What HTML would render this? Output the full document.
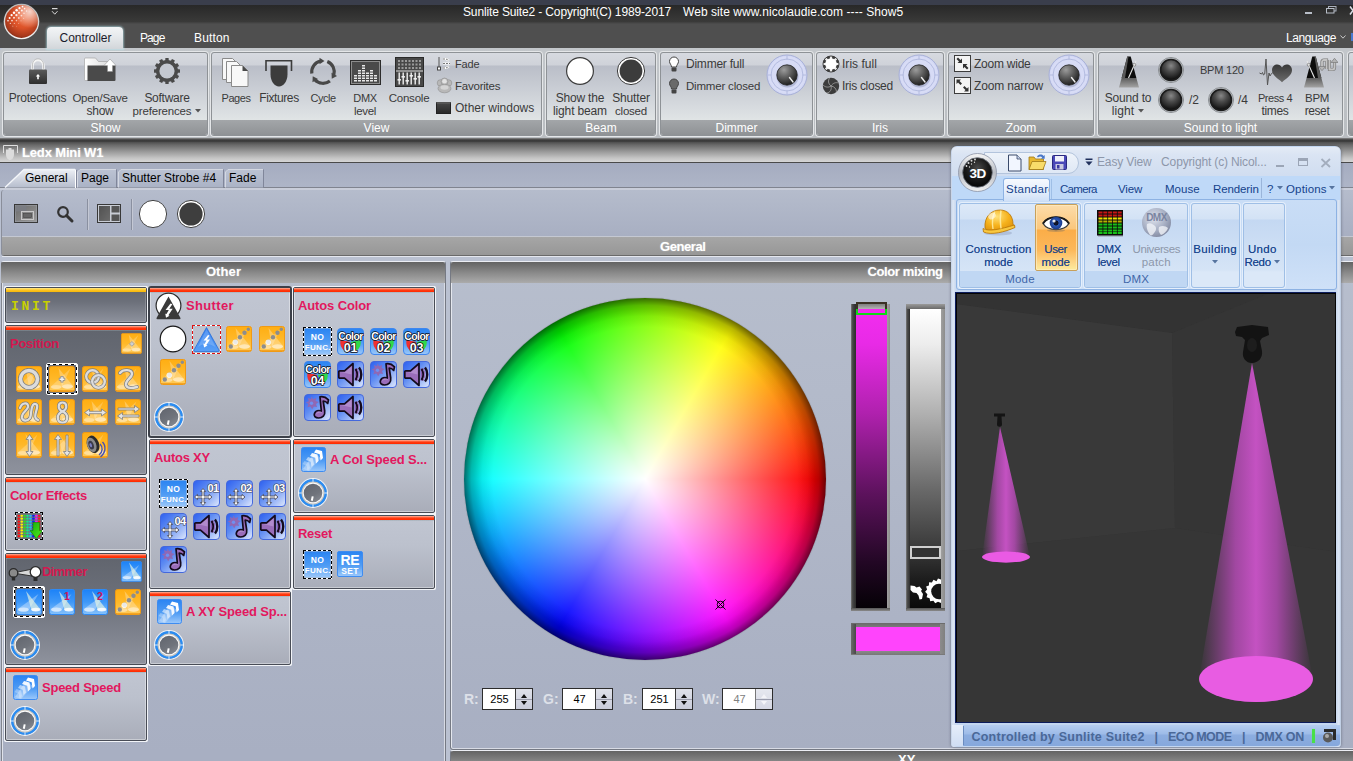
<!DOCTYPE html>
<html><head><meta charset="utf-8"><title>Sunlite Suite2</title>
<style>
*{box-sizing:border-box}
html,body{margin:0;padding:0}
body{width:1353px;height:761px;overflow:hidden;position:relative;background:#bac1d1;font-family:"Liberation Sans",sans-serif;font-size:12px;color:#222}
.a{position:absolute}
.t{position:absolute;white-space:nowrap;line-height:1}
/* main ribbon */
#topstrip{left:0;top:0;width:1353px;height:5px;background:#3a3e4c}
#titlebar{left:0;top:5px;width:1353px;height:19px;background:linear-gradient(#282828 0,#3a3a39 17px,#4a4a4a 18px,#4a4a4a 19px)}
#tabrow{left:0;top:24px;width:1353px;height:24px;background:#4f4f4f}
#ribbon{left:0;top:48px;width:1353px;height:90px;background:linear-gradient(#c3c7cb,#b9bdc1);border-radius:4px 4px 0 0}
#ribbot{left:0;top:138px;width:1353px;height:5px;background:linear-gradient(#8a8a8a,#3a3a3a 40%,#444)}
.grp{position:absolute;top:52px;height:84px;border:1px solid #8e9296;border-radius:3px;background:linear-gradient(#d7dae0 0,#cfd2d9 12px,#babec8 13px,#c9cdd4 35px,#dbdfe2 60px,#e1e5e6 68px);box-shadow:0 0 0 1px #e4e6e8;overflow:hidden}
.grp .lab{position:absolute;left:0;right:0;bottom:0;height:15px;background:linear-gradient(#a3a6a9,#8f9295);color:#fff;text-align:center;font-size:12px;line-height:16px}
.rt{position:absolute;white-space:nowrap;line-height:13px;font-size:12px;color:#3a3a3a;text-align:center}
</style></head><body>
<!-- MAIN WINDOW TOP -->
<div class="a" id="topstrip"></div>
<div class="a" id="titlebar"></div>
<div class="a" id="tabrow"></div>
<div class="a" id="ribbon"></div>
<div class="a" id="ribbot"></div>
<!--RIBBON-START-->
<!-- title text -->
<div class="t" style="left:463px;top:6px;color:#fff;font-size:12px;letter-spacing:-0.14px;white-space:pre">Sunlite Suite2 - Copyright(C) 1989-2017</div><div class="t" style="left:683px;top:6px;color:#fff;font-size:12px;letter-spacing:0.06px;white-space:pre">Web site www.nicolaudie.com ---- Show5</div>
<!-- window controls -->
<div class="a" style="left:1305px;top:12px;width:7px;height:2px;background:#b8bec8"></div>
<svg class="a" style="left:1326px;top:6px" width="11" height="8" viewBox="0 0 11 8"><rect x="2.500" y="0.500" width="7.500" height="4.500" fill="none" stroke="#aab0bc"/><rect x="0.500" y="2.500" width="7.500" height="4.500" fill="#303030" stroke="#b8bec8"/></svg><svg class="a" style="left:1349px;top:6px" width="6" height="9" viewBox="0 0 6 9"><path d="M1 0.500l6 8M1 8.500l6 -8" stroke="#d8dce4" stroke-width="1.600"/></svg>
<!-- orb -->
<svg class="a" style="left:2px;top:2px" width="40" height="40" viewBox="0 0 40 40">
<defs>
<radialGradient id="orbg" cx="0.55" cy="0.38" r="0.7"><stop offset="0" stop-color="#ee6a3c"/><stop offset="0.45" stop-color="#dc5228"/><stop offset="0.8" stop-color="#a8391c"/><stop offset="1" stop-color="#6e2612"/></radialGradient>
<linearGradient id="orbr" x1="0" y1="0" x2="0" y2="1"><stop offset="0" stop-color="#b8b8b8"/><stop offset="1" stop-color="#f4f4f4"/></linearGradient>
<radialGradient id="orbh" cx="0.75" cy="0.2" r="0.5"><stop offset="0" stop-color="#fff" stop-opacity="0.75"/><stop offset="1" stop-color="#fff" stop-opacity="0"/></radialGradient>
</defs>
<circle cx="19.5" cy="19.5" r="17.8" fill="url(#orbr)"/>
<circle cx="19.5" cy="19.5" r="16.4" fill="url(#orbg)"/>
<circle cx="19.5" cy="19.5" r="16.4" fill="url(#orbh)"/>
<g fill="#fff">
<circle cx="20.5" cy="4.6" r="0.9"/><circle cx="17.5" cy="6.2" r="1.1"/><circle cx="14.6" cy="8.3" r="1.2"/><circle cx="12" cy="10.7" r="1.2"/><circle cx="9.6" cy="13.2" r="1.1"/><circle cx="7.6" cy="16" r="1"/><circle cx="6" cy="18.8" r="0.8"/>
<circle cx="22.6" cy="6.6" r="0.8" opacity="0.9"/><circle cx="19.8" cy="8.6" r="1" opacity="0.9"/><circle cx="17" cy="10.8" r="1.1" opacity="0.9"/><circle cx="14.4" cy="13.2" r="1.1" opacity="0.9"/><circle cx="12" cy="15.8" r="1" opacity="0.85"/><circle cx="10" cy="18.6" r="0.9" opacity="0.8"/><circle cx="8.4" cy="21.4" r="0.7" opacity="0.7"/>
<circle cx="24.6" cy="9" r="0.7" opacity="0.7"/><circle cx="22" cy="11.2" r="0.8" opacity="0.7"/><circle cx="19.4" cy="13.6" r="0.9" opacity="0.7"/><circle cx="16.8" cy="16" r="0.9" opacity="0.65"/><circle cx="14.4" cy="18.6" r="0.8" opacity="0.6"/><circle cx="12.4" cy="21.4" r="0.7" opacity="0.5"/><circle cx="10.8" cy="24.2" r="0.6" opacity="0.4"/>
<circle cx="21.6" cy="16.4" r="0.6" opacity="0.4"/><circle cx="19" cy="18.8" r="0.6" opacity="0.4"/><circle cx="16.6" cy="21.4" r="0.6" opacity="0.35"/><circle cx="14.6" cy="24.2" r="0.5" opacity="0.3"/>
</g>
</svg>
<!-- quick access arrow -->
<svg class="a" style="left:51px;top:7px" width="8" height="9" viewBox="0 0 8 9"><rect x="1" y="1" width="5.5" height="1.2" fill="#d8d8d8"/><path d="M1 4.2 L3.75 7.2 L6.5 4.2" fill="none" stroke="#d8d8d8" stroke-width="1"/></svg>
<!-- tabs -->
<div class="a" style="left:47px;top:27px;width:76px;height:22px;border-radius:4px 4px 0 0;background:linear-gradient(#f3f5f6,#e6e9ec 45%,#d2d6da);box-shadow:0 0 2px 1px rgba(190,240,250,.55)"></div>
<div class="t" style="left:59.5px;top:32px;color:#1a1a2a;font-size:12px;letter-spacing:-0.003px">Controller</div>
<div class="t" style="left:140px;top:32px;color:#fff;font-size:12px;letter-spacing:-0.908px">Page</div>
<div class="t" style="left:194px;top:32px;color:#fff;font-size:12px;letter-spacing:0.166px">Button</div>
<div class="t" style="left:1286px;top:32px;color:#fff;font-size:12px;letter-spacing:-0.424px">Language</div>
<svg class="a" style="left:1340px;top:35px" width="6" height="4" viewBox="0 0 6 4"><path d="M0.500 0.500 L3 3.200 L5.500 0.500" fill="none" stroke="#c8c8c8" stroke-width="1"/></svg>
<div class="a" style="left:1351px;top:33px;width:2px;height:8px;background:#4a7ad0"></div>
<!-- groups -->
<div class="grp" style="left:3px;width:205px"><div class="lab">Show</div></div>
<div class="grp" style="left:211px;width:331px"><div class="lab">View</div></div>
<div class="grp" style="left:546px;width:110px"><div class="lab">Beam</div></div>
<div class="grp" style="left:660px;width:153px"><div class="lab">Dimmer</div></div>
<div class="grp" style="left:816px;width:128px"><div class="lab">Iris</div></div>
<div class="grp" style="left:948px;width:146px"><div class="lab">Zoom</div></div>
<div class="grp" style="left:1098px;width:245px"><div class="lab">Sound to light</div></div>
<div class="grp" style="left:1348px;width:20px"><div class="lab"></div></div>
<svg width="0" height="0" style="position:absolute"><defs>
<linearGradient id="dk" x1="0" y1="0" x2="0" y2="1"><stop offset="0" stop-color="#5a5a5a"/><stop offset="1" stop-color="#2e2e2e"/></linearGradient>
<radialGradient id="knobbg" cx="0.5" cy="0.5" r="0.5"><stop offset="0" stop-color="#d4d9f4"/><stop offset="0.9" stop-color="#d8dcf6"/><stop offset="1" stop-color="#ccd2f0"/></radialGradient>
<radialGradient id="knob" cx="0.35" cy="0.25" r="0.85"><stop offset="0" stop-color="#9c9c9c"/><stop offset="0.45" stop-color="#5c5c5c"/><stop offset="0.85" stop-color="#262626"/><stop offset="1" stop-color="#141414"/></radialGradient>
<radialGradient id="rbtn" cx="0.5" cy="0.3" r="0.62"><stop offset="0" stop-color="#888"/><stop offset="0.45" stop-color="#4c4c4c"/><stop offset="0.8" stop-color="#2a2a2a"/><stop offset="1" stop-color="#151515"/></radialGradient>
<g id="bigknob"><circle cx="21" cy="21" r="20" fill="url(#knobbg)" stroke="#a8b0d8" stroke-width="1"/><circle cx="21" cy="21" r="16" fill="none" stroke="#b4bce0" stroke-width="1"/><path d="M21 1v5M21 36v5M1 21h5M36 21h5" stroke="#b4bce0" stroke-width="1"/><circle cx="21.5" cy="22.5" r="11" fill="#9098b8" opacity="0.5"/><circle cx="21" cy="21" r="10.2" fill="url(#knob)" stroke="#222" stroke-width="0.8"/><path d="M23.5 23.5 L27 28" stroke="#eee" stroke-width="1.4" stroke-linecap="round"/></g>
<g id="rbt"><circle cx="13" cy="13" r="12.5" fill="#bfc3c7" stroke="#8a8e92" stroke-width="1"/><circle cx="13" cy="13" r="10.5" fill="url(#rbtn)" stroke="#1c1c1c" stroke-width="1.6"/></g>
</defs></svg>
<!-- SHOW group -->
<svg class="a" style="left:27px;top:57px" width="22" height="29" viewBox="0 0 22 29"><path d="M5.5 13 V8.5 A5.5 5.5 0 0 1 16.5 8.5 V13" fill="none" stroke="#f4f4f4" stroke-width="2.6"/><path d="M5.5 13 V8.5 A5.5 5.5 0 0 1 16.5 8.5 V13" fill="none" stroke="#a0a0a0" stroke-width="0.6" transform="translate(0,-1.2)"/><rect x="2" y="12.5" width="18" height="14.5" rx="1" fill="url(#dk)"/><path d="M11 17 l2.2 2.6h-1.4v2.6h-1.6v-2.6h-1.4z" fill="#fff"/></svg>
<div class="rt" style="left:4px;width:67px;top:92px;"><span style="letter-spacing:-0.248px">Protections</span></div>
<svg class="a" style="left:83px;top:57px" width="34" height="26" viewBox="0 0 34 26"><defs><linearGradient id="fldw" x1="0" y1="0" x2="1" y2="0"><stop offset="0" stop-color="#fff"/><stop offset="1" stop-color="#d8d8d8"/></linearGradient></defs><path d="M1.500 2 a1 1 0 0 1 1 -1 h10 l3 3.500 h13 v19 h-26 a1 1 0 0 1 -1 -1z" fill="url(#fldw)" stroke="#9a9a9a" stroke-width="0.600"/><path d="M4.500 8.500 h28 v14.500 a1 1 0 0 1 -1 1 h-27z" fill="#4a4a4a"/><path d="M27 2 l6 6.500h-3.500v6h-5v-6h-3.500z" fill="#fff" stroke="#8a8a8a" stroke-width="0.500"/></svg>
<div class="rt" style="left:66px;width:68px;top:92px;"><span style="font-size:11.5px;letter-spacing:-0.261px">Open/Save</span><br><span style="letter-spacing:-0.279px">show</span></div>
<svg class="a" style="left:153px;top:57px" width="28" height="28" viewBox="-14 -14 28 28"><g fill="#4a4a4a"><circle r="11"/><g id="teeth"><rect x="-1.700" y="-13" width="3.400" height="4" rx="0.500"/><rect x="-1.700" y="9" width="3.400" height="4" rx="0.500"/></g><use href="#teeth" transform="rotate(30)"/><use href="#teeth" transform="rotate(60)"/><use href="#teeth" transform="rotate(90)"/><use href="#teeth" transform="rotate(120)"/><use href="#teeth" transform="rotate(150)"/></g><circle r="7.600" fill="#c4c8d0"/></svg>
<div class="rt" style="left:130px;width:74px;top:92px;"><span style="letter-spacing:-0.27px">Software</span><br><span style="font-size:11.5px;letter-spacing:-0.176px">preferences</span>&nbsp;&nbsp;&nbsp;</div>
<svg class="a" style="left:195px;top:109px" width="6" height="4" viewBox="0 0 6 4"><path d="M0 0h6l-3 3.5z" fill="#555"/></svg>
<!-- VIEW group -->
<svg class="a" style="left:221px;top:57px" width="30" height="31" viewBox="0 0 30 31"><g stroke="#8a8a8a" stroke-width="1" fill="#f8f8f8"><path d="M1.5 1.5h10l4 4v17h-14z"/><path d="M5.500 4.500h10l4 4v17h-14z"/><path d="M10.500 8.500h11l5.500 5.500v15.500h-16.500z"/></g><path d="M21.500 8.500v5.500h5.500z" fill="#4a4a4a"/></svg>
<div class="rt" style="left:211px;width:50px;top:92px;"><span style="font-size:11px;letter-spacing:-0.461px">Pages</span></div>
<svg class="a" style="left:265px;top:59px" width="28" height="29" viewBox="0 0 28 29"><path d="M1 12V1.800h25.500V12" fill="none" stroke="#3c3c3c" stroke-width="1.600"/><path d="M5.500 6.500 h17 v9 c0 6.500 -4 12 -8.500 12 s-8.500 -5.500 -8.500 -12z" fill="#3c3c3c"/></svg>
<div class="rt" style="left:254px;width:50px;top:92px;"><span style="letter-spacing:-0.398px">Fixtures</span></div>
<svg class="a" style="left:308px;top:57px" width="30" height="30" viewBox="-15 -15 30 30"><g id="cyc"><path d="M-2.500 -11 A11.300 11.300 0 0 0 -11.200 1.500" fill="none" stroke="#484848" stroke-width="3.200"/><path d="M-3.500 -14.200 l5 3.200 -5 3.200z" fill="#484848"/></g><use href="#cyc" transform="rotate(120)"/><use href="#cyc" transform="rotate(240)"/></svg>
<div class="rt" style="left:298px;width:50px;top:92px;"><span style="font-size:11px;letter-spacing:-0.483px">Cycle</span></div>
<svg class="a" style="left:350px;top:60px" width="31" height="25" viewBox="0 0 31 25"><rect x="0.5" y="0.5" width="30" height="24" fill="#4a4a4a" stroke="#2c2c2c"/><rect x="1.500" y="1.500" width="28" height="22" fill="none" stroke="#8c8c8c" stroke-width="1"/><g fill="#e8e8e8"><path d="M4 20h3v1.500h-3zM4 17.500h3v1.500h-3zM4 15h3v1.500h-3z"/><path d="M8 20h3v1.500h-3zM8 17.500h3v1.500h-3zM8 15h3v1.500h-3zM8 12.500h3v1.500h-3zM8 10h3v1.500h-3z"/><path d="M12 20h3v1.500h-3zM12 17.500h3v1.500h-3zM12 15h3v1.500h-3zM12 12.500h3v1.500h-3zM12 10h3v1.500h-3zM12 7.500h3v1.500h-3zM12 5h3v1.500h-3z"/><path d="M16 20h3v1.500h-3zM16 17.500h3v1.500h-3zM16 15h3v1.500h-3zM16 12.500h3v1.500h-3z"/><path d="M20 20h3v1.500h-3zM20 17.500h3v1.500h-3zM20 15h3v1.500h-3zM20 12.500h3v1.500h-3zM20 10h3v1.500h-3z"/><path d="M24 20h3v1.500h-3zM24 17.500h3v1.500h-3zM24 15h3v1.500h-3z"/></g></svg>
<div class="rt" style="left:340px;width:50px;top:92px;"><span style="font-size:11px;letter-spacing:-0.384px">DMX</span><br><span style="font-size:11.5px;letter-spacing:-0.311px">level</span></div>
<svg class="a" style="left:395px;top:57px" width="29" height="30" viewBox="0 0 29 30"><rect x="0.5" y="0.5" width="28" height="29" fill="#484848" stroke="#2a2a2a"/><g fill="#9a9a9a"><path d="M3 3h2v2h-2zM6.500 3h2v2h-2zM10 3h2v2h-2zM13.500 3h2v2h-2zM17 3h2v2h-2zM20.500 3h2v2h-2zM24 3h2v2h-2zM3 6.500h2v2h-2zM6.500 6.500h2v2h-2zM10 6.500h2v2h-2zM13.500 6.500h2v2h-2zM17 6.500h2v2h-2zM20.500 6.500h2v2h-2zM24 6.500h2v2h-2zM3 10h2v2h-2zM6.500 10h2v2h-2zM10 10h2v2h-2zM13.500 10h2v2h-2zM17 10h2v2h-2zM20.500 10h2v2h-2zM24 10h2v2h-2z"/></g><rect x="1" y="13.500" width="27" height="1" fill="#ddd"/><g fill="#f0f0f0"><rect x="3.500" y="15.500" width="1.400" height="12"/><rect x="7.500" y="15.500" width="1.400" height="12"/><rect x="11.500" y="15.500" width="1.400" height="12"/><rect x="15.500" y="15.500" width="1.400" height="12"/><rect x="19.500" y="15.500" width="1.400" height="12"/><rect x="23.500" y="15.500" width="1.400" height="12"/><rect x="2.500" y="22" width="3.400" height="1.600"/><rect x="6.500" y="19" width="3.400" height="1.600"/><rect x="10.500" y="23" width="3.400" height="1.600"/><rect x="14.500" y="18" width="3.400" height="1.600"/><rect x="18.500" y="21" width="3.400" height="1.600"/><rect x="22.500" y="19" width="3.400" height="1.600"/></g></svg>
<div class="rt" style="left:384px;width:50px;top:92px;"><span style="font-size:11.5px;letter-spacing:-0.215px">Console</span></div>
<svg class="a" style="left:436px;top:56px" width="16" height="16" viewBox="0 0 16 16"><path d="M3 1v10" stroke="#555" stroke-width="1"/><rect x="1.500" y="11" width="3" height="3" fill="#fff" stroke="#444" stroke-width="1"/><path d="M7 3h3l3 1.500M7 7.500h7M7 12h3l3-1.500" stroke="#fff" stroke-width="2.200" fill="none"/><path d="M7 3h3l3 1.500M7 7.500h7M7 12h3l3-1.500" stroke="#555" stroke-width="0.800" fill="none" stroke-dasharray="2 1"/></svg>
<div class="rt" style="left:455px;top:58px;text-align:left;"><span style="font-size:11px;letter-spacing:-0.17px">Fade</span></div>
<svg class="a" style="left:436px;top:77px" width="17" height="17" viewBox="0 0 17 17"><g fill="#b8b8b8" stroke="#8e8e8e" stroke-width="0.6"><circle cx="4.500" cy="6" r="3.300"/><circle cx="12.500" cy="6" r="3.300"/><circle cx="8.500" cy="4.500" r="3.500"/><ellipse cx="8.500" cy="11.500" rx="6.500" ry="4.300"/></g><circle cx="8.500" cy="4.300" r="2.300" fill="#e2e2e2"/><ellipse cx="8.500" cy="10.500" rx="4" ry="2.200" fill="#d4d4d4"/></svg>
<div class="rt" style="left:455px;top:80px;text-align:left;"><span style="font-size:11.5px;letter-spacing:-0.222px">Favorites</span></div>
<div class="a" style="left:436px;top:102px;width:15px;height:12px;background:linear-gradient(#444,#2a2a2a);border:1px solid #222;border-top:2px solid #555"></div>
<div class="rt" style="left:455px;top:102px;text-align:left;"><span style="letter-spacing:-0.013px">Other windows</span></div>
<!-- BEAM -->
<svg class="a" style="left:565px;top:56px" width="30" height="30" viewBox="0 0 30 30"><circle cx="15" cy="15" r="13.400" fill="#fff" stroke="#3c3c3c" stroke-width="1.200"/></svg>
<div class="rt" style="left:546px;width:68px;top:92px;"><span style="letter-spacing:-0.206px">Show the</span><br><span style="letter-spacing:-0.148px">light beam</span></div>
<svg class="a" style="left:616px;top:56px" width="30" height="30" viewBox="0 0 30 30"><circle cx="15" cy="15" r="13.600" fill="#fff" stroke="#3c3c3c" stroke-width="1"/><circle cx="15" cy="15" r="11.400" fill="#3c3c3c"/></svg>
<div class="rt" style="left:606px;width:50px;top:92px;"><span style="letter-spacing:-0.158px">Shutter</span><br><span style="font-size:11.5px;letter-spacing:-0.242px">closed</span></div>
<!-- DIMMER -->
<svg class="a" style="left:668px;top:56px" width="12" height="17" viewBox="0 0 12 17"><path d="M6 1 a4.500 4.500 0 0 1 4.500 4.500 c0 2.200 -2 3.200 -2 5.500h-5c0 -2.300 -2 -3.300 -2 -5.500 a4.500 4.500 0 0 1 4.500 -4.500z" fill="#fff" stroke="#444" stroke-width="1"/><rect x="3.500" y="11.500" width="5" height="4" rx="1" fill="#444"/></svg>
<div class="rt" style="left:686px;top:58px;text-align:left;"><span style="letter-spacing:-0.234px">Dimmer full</span></div>
<svg class="a" style="left:668px;top:78px" width="12" height="17" viewBox="0 0 12 17"><path d="M6 1 a4.500 4.500 0 0 1 4.500 4.500 c0 2.200 -2 3.200 -2 5.500h-5c0 -2.300 -2 -3.300 -2 -5.500 a4.500 4.500 0 0 1 4.500 -4.500z" fill="#6a6a6a" stroke="#444" stroke-width="1"/><rect x="3.500" y="11.500" width="5" height="4" rx="1" fill="#444"/></svg>
<div class="rt" style="left:686px;top:80px;text-align:left;"><span style="font-size:11.5px;letter-spacing:-0.191px">Dimmer closed</span></div>
<svg class="a" style="left:766px;top:54px" width="42" height="42"><use href="#bigknob"/></svg>
<!-- IRIS -->
<svg class="a" style="left:822px;top:55px" width="18" height="18" viewBox="-9 -9 18 18"><circle r="8" fill="#3c3c3c"/><circle r="5.800" fill="#fff"/><g stroke="#fff" stroke-width="2.200"><path d="M0 -8v16M-8 0h16M-5.600 -5.600l11.200 11.200M-5.600 5.600l11.200 -11.200" opacity="0.9"/></g><circle r="8" fill="none" stroke="#3c3c3c" stroke-width="1"/></svg>
<div class="rt" style="left:842px;top:58px;text-align:left;"><span style="letter-spacing:0.025px">Iris full</span></div>
<svg class="a" style="left:822px;top:77px" width="18" height="18" viewBox="-9 -9 18 18"><circle r="8.200" fill="#3c3c3c"/><g stroke="#9a9a9a" stroke-width="0.900" fill="none"><path d="M0 0 C2 -3 5 -4 7.500 -3"/><path d="M0 0 C3.500 0.500 5.500 3 5.500 6"/><path d="M0 0 C1 3.500 -1 6.500 -4 7"/><path d="M0 0 C-3 2 -6 1 -8 -1"/><path d="M0 0 C-3 -2.500 -3 -5.500 -1.500 -8"/></g></svg>
<div class="rt" style="left:842px;top:80px;text-align:left;"><span style="letter-spacing:-0.285px">Iris closed</span></div>
<svg class="a" style="left:898px;top:54px" width="42" height="42"><use href="#bigknob"/></svg>
<!-- ZOOM -->
<svg class="a" style="left:954px;top:55px" width="17" height="17" viewBox="0 0 17 17"><rect x="0.500" y="0.500" width="16" height="16" fill="#f4f4f4" stroke="#3c3c3c"/><path d="M8 8 V3.500 L6.500 5 L4 2.500 L2.500 4 L5 6.500 L3.500 8z" fill="#333"/><path d="M9 9 h4.500 L12 10.500 l2.500 2.500 -1.500 1.500 -2.500 -2.500 L9 13.500z" fill="#333"/></svg>
<div class="rt" style="left:974px;top:58px;text-align:left;"><span style="letter-spacing:-0.243px">Zoom wide</span></div>
<svg class="a" style="left:954px;top:77px" width="17" height="17" viewBox="0 0 17 17"><rect x="0.500" y="0.500" width="16" height="16" fill="#f4f4f4" stroke="#3c3c3c"/><path d="M2.500 2.500 h4.500 L5.500 4 L8 6.500 L6.500 8 L4 5.500 L2.500 7z" fill="#333"/><path d="M14.500 14.500 V10 L13 11.500 L10.500 9 L9 10.500 L11.500 13 L10 14.500z" fill="#333"/></svg>
<div class="rt" style="left:974px;top:80px;text-align:left;"><span style="letter-spacing:-0.153px">Zoom narrow</span></div>
<svg class="a" style="left:1048px;top:54px" width="42" height="42"><use href="#bigknob"/></svg>
<!-- SOUND TO LIGHT -->
<svg width="0" height="0" style="position:absolute"><defs><linearGradient id="metg" x1="0" y1="0" x2="0" y2="1"><stop offset="0" stop-color="#5c5c5c"/><stop offset="1" stop-color="#a4a4a4"/></linearGradient>
<g id="metro"><path d="M10.300 0.500 h3.400 l5.700 21.500 h-14.800z" fill="#0c0c0c"/><path d="M10.300 0.500 h1.200 l-3.500 21.500 h-3.400z" fill="#5a5a5a"/><path d="M4.600 22 h14.800 l2.600 9.500 h-20z" fill="url(#metg)"/><path d="M11.500 22 L19 5" stroke="#e8e8e8" stroke-width="1.100"/><circle cx="17.300" cy="8.800" r="1.500" fill="#e0e0e0" stroke="#555" stroke-width="0.500"/></g></defs></svg>
<svg class="a" style="left:1117px;top:56px" width="24" height="32" viewBox="0 0 24 32"><use href="#metro"/></svg>
<div class="rt" style="left:1098px;width:60px;top:92px;"><span style="letter-spacing:-0.168px">Sound to</span><br><span style="letter-spacing:0.097px">light</span>&nbsp;&nbsp;&nbsp;</div>
<svg class="a" style="left:1138px;top:109px" width="6" height="4" viewBox="0 0 6 4"><path d="M0 0h6l-3 3.500z" fill="#555"/></svg>
<svg class="a" style="left:1158px;top:57px" width="26" height="26"><use href="#rbt"/></svg>
<svg class="a" style="left:1158px;top:87px" width="26" height="26"><use href="#rbt"/></svg>
<svg class="a" style="left:1208px;top:87px" width="26" height="26"><use href="#rbt"/></svg>
<div class="rt" style="left:1200px;top:64px;text-align:left;"><span style="font-size:11px;letter-spacing:-0.221px">BPM 120</span></div>
<div class="rt" style="left:1189px;top:94px;text-align:left">/2</div>
<div class="rt" style="left:1238px;top:94px;text-align:left">/4</div>
<svg class="a" style="left:1258px;top:56px" width="36" height="32" viewBox="0 0 36 32"><defs><linearGradient id="hrt" x1="0" y1="0" x2="0" y2="1"><stop offset="0" stop-color="#383838"/><stop offset="1" stop-color="#6c6c6c"/></linearGradient></defs><path d="M24 11.500 c-2.500 -5 -10 -3.500 -10 2.500 c0 5.500 6 8.500 10 12.200 c4 -3.700 10 -6.700 10 -12.200 c0 -6 -7.500 -7.500 -10 -2.500z" fill="url(#hrt)"/><path d="M1.500 17 l2 1 1 -1.500 1 2.500 1.200 -1 1.300 -15 1.500 26 1.500 -12 1 3 1.500 -2.500 1.500 -1" fill="none" stroke="#555" stroke-width="1"/></svg>
<div class="rt" style="left:1250px;width:50px;top:92px;"><span style="font-size:11px;letter-spacing:-0.442px">Press 4</span><br><span style="letter-spacing:-0.354px">times</span></div>
<svg class="a" style="left:1301px;top:55px" width="37" height="33" viewBox="0 0 37 33"><g transform="translate(25,1) scale(-1,1)"><use href="#metro"/></g><g fill="none" stroke="#7a7a7a" stroke-width="3.200"><path d="M21 13 v-6 a2 2 0 0 1 2 -2 h2.500 v9"/><path d="M28.500 5 v9.500 h3 a2 2 0 0 0 2 -2 v-6"/></g><g fill="none" stroke="#c4c4c4" stroke-width="1.800"><path d="M21 13 v-6 a2 2 0 0 1 2 -2 h2.500 v9"/><path d="M28.500 5 v9.500 h3 a2 2 0 0 0 2 -2 v-6"/></g><path d="M17.500 11.500 h7 l-3.500 4.200z M30 7.500 h7 l-3.500 -4.200z" fill="#b4b4b4" stroke="#7a7a7a" stroke-width="0.700"/></svg>
<div class="rt" style="left:1292px;width:50px;top:92px;"><span style="font-size:11.5px;letter-spacing:-0.374px">BPM</span><br><span style="letter-spacing:-0.398px">reset</span></div>
<!--RIBBON-END-->
<!--LEDX-START-->
<!-- LEDX title -->
<div class="a" style="left:0;top:142px;width:1353px;height:20px;background:linear-gradient(#4e4e4e 0,#6a6a6a 3px,#9c9c9c 10px,#c4c4c4 16px,#d6d6d6 20px)"></div>
<div class="a" style="left:0;top:162px;width:1353px;height:1px;background:#4a4a4a"></div>
<svg class="a" style="left:2px;top:144px" width="17" height="17" viewBox="0 0 17 17"><path d="M1.500 9V1.500h14V9" fill="none" stroke="#e0e0e0" stroke-width="1"/><path d="M4 5.500 h2.500v-1.500h3v1.500h2.500 v5 c0 3 -2 5.500 -4 5.500 s-4 -2.500 -4 -5.500z" fill="#dcdcdc"/></svg>
<div class="t" style="left:22px;top:146px;color:#fff;font-weight:bold;font-size:13px;letter-spacing:-0.15px;text-shadow:0 0 2px rgba(255,255,255,.6)">Ledx Mini W1</div>
<!-- tab strip -->
<div class="a" id="tabstripbg" style="left:0;top:163px;width:1353px;height:24px;background:linear-gradient(#a5acc0,#aeb5c7)"></div>
<div class="a" style="left:0;top:187px;width:1353px;height:1px;background:#80848f"></div>
<div class="a" style="left:0;top:188px;width:1353px;height:2px;background:#c9cdd9"></div>
<svg class="a" style="left:0;top:165px" width="280" height="24" viewBox="0 0 280 24">
<defs><linearGradient id="tabA" x1="0" y1="0" x2="0" y2="1"><stop offset="0" stop-color="#eceff5"/><stop offset="1" stop-color="#b6bdcd"/></linearGradient>
<linearGradient id="tabI" x1="0" y1="0" x2="0" y2="1"><stop offset="0" stop-color="#bcc3d3"/><stop offset="1" stop-color="#aab2c5"/></linearGradient></defs>
<path d="M77.500 22.500 V7 l2.500 -2.500 h36 v18z" fill="url(#tabI)"/><path d="M77.500 22.500 V7 l2.500 -2.500 h36" fill="none" stroke="#d4d8e2"/><path d="M116.500 4.500v18" stroke="#80869a"/>
<path d="M118.500 22.500 V7 l2.500 -2.500 h102 v18z" fill="url(#tabI)"/><path d="M118.500 22.500 V7 l2.500 -2.500 h102" fill="none" stroke="#d4d8e2"/><path d="M223.500 4.500v18" stroke="#80869a"/>
<path d="M225.500 22.500 V7 l2.500 -2.500 h35 v18z" fill="url(#tabI)"/><path d="M225.500 22.500 V7 l2.500 -2.500 h35" fill="none" stroke="#d4d8e2"/><path d="M263.500 4.500v18" stroke="#80869a"/>
<path d="M5 22.500 L24 4.500 H75.500 V22.500z" fill="url(#tabA)"/><path d="M5 22.500 L24 4.500 H75" fill="none" stroke="#f4f6fa" stroke-width="1.400"/><path d="M75.500 4.500V23" stroke="#fff" stroke-width="1"/><path d="M76.500 5V23" stroke="#80869a" stroke-width="1"/>
</svg>
<div class="t" style="left:25px;top:172px;color:#000;font-size:12px">General</div>
<div class="t" style="left:81px;top:172px;color:#000;font-size:12px">Page</div>
<div class="t" style="left:122px;top:172px;color:#000;font-size:12px">Shutter Strobe #4</div>
<div class="t" style="left:229px;top:172px;color:#000;font-size:12px">Fade</div>
<!-- toolbar panel -->
<div class="a" style="left:1px;top:190px;width:1360px;height:66px;border-left:1px solid #8a8e9a;border-radius:3px 0 0 3px;background:linear-gradient(#b5bccc 0,#a8afc2 46px,#c4c8d2 46px,#c4c8d2 47px,#a6a6a6 47px,#979797 65px,#6a6a6a 65px)"></div>
<div class="a" style="left:2px;top:256px;width:1360px;height:1px;background:#e4e7ee"></div>
<svg class="a" style="left:14px;top:204px" width="25" height="20" viewBox="0 0 25 20"><defs><linearGradient id="tbi" x1="0" y1="0" x2="1" y2="1"><stop offset="0" stop-color="#6a6a6a"/><stop offset="1" stop-color="#9a9a9a"/></linearGradient></defs><rect x="0.500" y="0.500" width="23" height="18" fill="#a0a4ac" stroke="#383838"/><rect x="1.500" y="1.500" width="21" height="16" fill="url(#tbi)"/><rect x="1.500" y="1.500" width="11" height="6" fill="#7a7c82"/><rect x="7.500" y="7.500" width="12" height="8" fill="#888" stroke="#c8c8c8"/><rect x="9.500" y="9.500" width="8" height="4" fill="#666" stroke="#444" stroke-width="0.6"/></svg>
<svg class="a" style="left:56px;top:205px" width="19" height="19" viewBox="0 0 19 19"><circle cx="7" cy="7" r="4.800" fill="none" stroke="#333" stroke-width="2.200"/><path d="M10.500 10.500 L16 16" stroke="#333" stroke-width="3" stroke-linecap="round"/></svg>
<div class="a" style="left:87px;top:199px;width:1px;height:31px;background:#8a90a0"></div><div class="a" style="left:88px;top:199px;width:1px;height:31px;background:#c4c8d4"></div>
<svg class="a" style="left:97px;top:204px" width="25" height="20" viewBox="0 0 25 20"><rect x="0.500" y="0.500" width="23" height="18" fill="#c8ccd4" stroke="#383838"/><rect x="2" y="2" width="11" height="15" fill="url(#tbi)"/><rect x="2" y="2" width="11" height="15" fill="#333" opacity="0.45"/><rect x="14.500" y="2" width="8" height="6.500" fill="#555"/><rect x="14.500" y="10.500" width="8" height="6.500" fill="#555"/></svg>
<div class="a" style="left:131px;top:199px;width:1px;height:31px;background:#8a90a0"></div><div class="a" style="left:132px;top:199px;width:1px;height:31px;background:#c4c8d4"></div>
<svg class="a" style="left:138px;top:199px" width="30" height="30" viewBox="0 0 30 30"><circle cx="15" cy="15" r="13.600" fill="#fff" stroke="#444" stroke-width="1"/></svg>
<svg class="a" style="left:176px;top:199px" width="30" height="30" viewBox="0 0 30 30"><circle cx="15" cy="15" r="13.600" fill="#fff" stroke="#444" stroke-width="1"/><circle cx="15" cy="15" r="11.600" fill="#3e3e3e"/></svg>
<div class="t" style="left:660px;top:240px;color:#fff;font-weight:bold;font-size:13px;letter-spacing:-0.432px;text-shadow:0 0 1.5px rgba(255,255,255,.45)">General</div>
<!--LEDX-END-->
<!--OTHER-START-->
<style>
.pnlh{position:absolute;height:21px;background:linear-gradient(#636363,#8c8c8c 55%,#ababab);border-radius:2px 2px 0 0;color:#fff;font-weight:bold;font-size:13px;line-height:19px;text-shadow:0 0 1.5px rgba(255,255,255,.45)}
.g{position:absolute;border-radius:2px;border:1px solid #484c56;box-shadow:0 0 0 1px #f2f4f8, inset 0 0 0 1px rgba(255,255,255,.38);background:linear-gradient(#c1c6d2 0,#bcc1cd 40%,#a9adb9 100%)}
.g.dk{background:linear-gradient(#60646d 0,#6c707a 40%,#8e929d 100%);box-shadow:0 0 0 1px #f2f4f8, inset 0 0 0 1px rgba(255,255,255,.18)}
.g.sel{border-radius:3px;border:2px solid #3c4049;box-shadow:inset 0 0 0 1px rgba(255,255,255,.38)}
.g .bar{position:absolute;left:0;right:0;top:0;height:5px;background:linear-gradient(#ffb6a2 0,#ff6a46 1.2px,#ff3a10 2.2px,#ff2a00 3.9px,rgba(150,165,172,.75) 4.1px,rgba(150,165,172,.0) 5px)}
.g.sel .bar{left:0;right:0;top:0}
.g .bar.y{background:linear-gradient(#ffe890 0,#ffd44a 1.2px,#fcc21e 2.4px,#f8b808 3.9px,rgba(110,110,100,.7) 4.1px,rgba(110,110,100,0) 5px)}
.gt{position:absolute;white-space:nowrap;font-weight:bold;font-size:13px;line-height:1;color:#e2185e;letter-spacing:-0.1px}
.dk .gt{color:#d2184f}
.i{position:absolute;width:27px;height:27px}
.selb{position:absolute;width:32px;height:32px;border-radius:2px;border:1px solid #fff;background:repeating-linear-gradient(90deg,#000 0 3px,#fff 3px 6px) 0 0/100% 1px no-repeat,repeating-linear-gradient(90deg,#000 0 3px,#fff 3px 6px) 0 100%/100% 1px no-repeat,repeating-linear-gradient(0deg,#000 0 3px,#fff 3px 6px) 0 0/1px 100% no-repeat,repeating-linear-gradient(0deg,#000 0 3px,#fff 3px 6px) 100% 0/1px 100% no-repeat}
.dsh{position:absolute;background:repeating-linear-gradient(90deg,#000 0 3px,#fff 3px 5px) 0 0/100% 1px no-repeat,repeating-linear-gradient(90deg,#000 0 3px,#fff 3px 5px) 0 100%/100% 1px no-repeat,repeating-linear-gradient(0deg,#000 0 3px,#fff 3px 5px) 0 0/1px 100% no-repeat,repeating-linear-gradient(0deg,#000 0 3px,#fff 3px 5px) 100% 0/1px 100% no-repeat}
</style>
<svg width="0" height="0" style="position:absolute"><defs>
<linearGradient id="og" x1="0" y1="0" x2="0" y2="1"><stop offset="0" stop-color="#ffae12"/><stop offset="0.5" stop-color="#ffb828"/><stop offset="1" stop-color="#ffcc5c"/></linearGradient>
<linearGradient id="bg1" x1="0" y1="0" x2="1" y2="1"><stop offset="0" stop-color="#2c5ff0"/><stop offset="0.4" stop-color="#5f8cf2"/><stop offset="0.75" stop-color="#a8c0f8"/><stop offset="1" stop-color="#e2eafd"/></linearGradient>
<linearGradient id="bg2" x1="0" y1="0" x2="0" y2="1"><stop offset="0" stop-color="#2b84f2"/><stop offset="0.55" stop-color="#4f9cf4"/><stop offset="1" stop-color="#9cc8fa"/></linearGradient>
<linearGradient id="bg3" x1="0" y1="0" x2="0" y2="1"><stop offset="0" stop-color="#1c82f8"/><stop offset="0.5" stop-color="#3e98f8"/><stop offset="1" stop-color="#86c2fc"/></linearGradient>
<linearGradient id="sk" x1="0.2" y1="0" x2="0.8" y2="1"><stop offset="0" stop-color="#62666f"/><stop offset="0.6" stop-color="#70747c"/><stop offset="1" stop-color="#868a92"/></linearGradient>
<g id="to"><rect x="0.5" y="0.5" width="25" height="25" rx="2" fill="url(#og)" stroke="#f09a14"/><path d="M9.500 2 L13 21 A5.500 2.200 0 0 0 24 20 Z" fill="#fff" opacity="0.27"/><path d="M21.500 2.500 L2 20.500 A5.500 2.200 0 0 0 12.500 21.500 Z" fill="#fff" opacity="0.22"/><ellipse cx="18.500" cy="20.500" rx="5.500" ry="2.200" fill="#fff" opacity="0.45"/><ellipse cx="7.200" cy="21" rx="5.300" ry="2" fill="#fff" opacity="0.3"/><path d="M1 24.500h24" stroke="#ee9410" stroke-width="1" opacity="0.7"/></g>
<g id="tb"><rect x="0.5" y="0.5" width="25" height="25" rx="2" fill="url(#bg3)" stroke="#2f8af4"/><path d="M22.500 5 L2.500 19.500 A5.300 2 0 0 0 12.500 21.500 Z" fill="#fff" opacity="0.33"/><path d="M10 2 L15.500 21 A5 2 0 0 0 24 20 Z" fill="#f4fbe0" opacity="0.62"/><ellipse cx="7.400" cy="20.500" rx="5.200" ry="2" fill="#fff" opacity="0.55"/><ellipse cx="19.800" cy="20.600" rx="4.600" ry="1.900" fill="#fff" opacity="0.85"/></g>
<g id="tl"><rect x="0.5" y="0.5" width="26" height="26" rx="3.5" fill="url(#bg1)" stroke="#4468dc"/></g>
<g id="tv"><rect x="0.5" y="0.5" width="26" height="26" rx="3.5" fill="url(#bg2)" stroke="#3f86ee"/></g>
<g id="sknob"><circle cx="15" cy="15" r="14.400" fill="none" stroke="#f2f6fc" stroke-width="1.200" opacity="0.9"/><circle cx="15" cy="15" r="12.700" fill="#c9c6c0" stroke="#2b8cf1" stroke-width="2.400"/><circle cx="15" cy="15" r="10.400" fill="#fbfbfb"/><circle cx="15" cy="15" r="9.300" fill="url(#sk)"/><path d="M15 0.300v3.400M15 26.300v3.400M0.300 15h3.400M26.300 15h3.400" stroke="#fff" stroke-width="1" opacity="0.85"/><path d="M14.700 18.400 L13.800 22.800" stroke="#fff" stroke-width="2" stroke-linecap="butt"/></g>
<g id="dots"><use href="#to"/><g fill="#8d8d8d"><circle cx="4.800" cy="20.500" r="2.200"/><circle cx="9.500" cy="15.800" r="2.200"/><circle cx="14" cy="11.300" r="2.200"/><circle cx="18.500" cy="6.800" r="2.200"/><circle cx="22.300" cy="3.300" r="1.700"/></g><circle cx="9.300" cy="16.200" r="2.800" fill="#fff" opacity="0.8"/></g>
<g id="spk"><use href="#tl"/><path d="M2.800 9.800 h4.700 l8.500 -7.300 v22 l-8.500 -7.300 h-4.700 a1 1 0 0 1 -1 -1 v-5.400 a1 1 0 0 1 1 -1z" fill="#9a6dba" stroke="#140a1c" stroke-width="1.700" stroke-linejoin="round"/><path d="M4 11h4l6.500 -5.500v8z" fill="#c4a4dc" opacity="0.55"/><path d="M17.500 7.500 h3.500 v12 h-3.500z" fill="#8a5cae"/><path d="M18.500 8 c2.600 2.500 2.600 8.500 0 11" fill="none" stroke="#140a1c" stroke-width="2.200"/><path d="M22 6.500 c3 3.500 3 10.500 0 14" fill="none" stroke="#140a1c" stroke-width="2.400"/><path d="M20.300 8.500 c1.800 2.500 1.800 7.500 0 10" fill="none" stroke="#9a6dba" stroke-width="1.200"/></g>
<g id="note"><use href="#tl"/><g fill="#9068b4" transform="translate(7.5 9.3) scale(1.35) translate(-7.3 -9)"><path d="M7.300 4 l1.200 2 2.300 -1 -0.500 2.300 2.300 0.800 -2 1.400 0.800 2.300 -2.400 -0.500 -1.200 2.100 -1.200 -2.100 -2.400 0.600 0.800 -2.300 -2 -1.400 2.300 -0.800 -0.600 -2.300 2.300 0.900z"/></g><circle cx="7.500" cy="9.300" r="1.700" fill="#6f90f0"/><path d="M16 2.800 c3.500 -0.800 6 0.500 8.500 3 l-0.800 3.700 c-1.300 -1.700 -2.800 -2.500 -4.500 -2.500 l1.500 10 c0.700 4.500 -2.300 7 -6 7 c-3.500 0 -5.300 -2.200 -4.200 -4.700 c1.100 -2.400 4 -3.300 6.800 -2.300z" fill="#9a6dba" stroke="#140a1c" stroke-width="1.700" stroke-linejoin="round"/><path d="M12.500 19.500 c1.500 -1.500 3.500 -1.800 5 -1" stroke="#c4a4dc" stroke-width="1" fill="none" opacity="0.7"/></g>
<g id="nofunc"><rect x="0.5" y="0.5" width="26" height="26" rx="1" fill="url(#bg2)"/><g fill="#fff" font-family="Liberation Sans,sans-serif" font-weight="bold" font-size="8.500" text-anchor="middle" style="letter-spacing:0.3px"><text x="13.500" y="11.500">NO</text><text x="13.800" y="21.500" font-size="8">FUNC.</text></g></g>
</defs></svg>

<div class="a" style="left:1px;top:261px;width:445px;height:520px;border-radius:3px 3px 0 0;background:linear-gradient(#b7becd,#a8afc2 490px);border-left:1px solid #80848e;border-right:1px solid #757983;border-top:1px solid #eceef4;box-shadow:inset 1px 0 0 #dfe2ea,inset -1px 0 0 #d8dbe4"></div>
<div class="pnlh" style="left:1px;top:262px;width:444px;text-align:center;letter-spacing:0.106px;text-indent:1px">Other</div>
<div class="a" style="left:4px;top:286px;width:144px;height:456px;background:#f2f4f8;border-radius:2px"></div><div class="a" style="left:148px;top:286px;width:144px;height:380px;background:#f2f4f8;border-radius:2px"></div><div class="a" style="left:292px;top:286px;width:144px;height:304px;background:#f2f4f8;border-radius:2px"></div>
<div class="g dk" style="left:5px;top:287px;width:142px;height:36px"><div class="bar y"></div>
<div class="t" style="left:5px;top:12px;color:#c8d000;font-family:'Liberation Mono',monospace;font-weight:bold;font-size:13px;letter-spacing:2.7px">INIT</div>
</div>
<div class="g dk" style="left:5px;top:325px;width:142px;height:150px"><div class="bar "></div>
<div class="gt" style="left:4px;top:11px;letter-spacing:-0.285px">Position</div>
<svg class="i" style="left:115px;top:7px;width:21px;height:21px" viewBox="0 0 26 26"><use href="#to"/><path d="M13.500 10.500l3 3 -3 3 -3 -3z" fill="#d0d0d0" stroke="#8a8a8a" stroke-width="0.800"/></svg>
<svg class="i" style="left:10px;top:40px;width:26px;height:26px" viewBox="0 0 26 26"><use href="#to"/><circle cx="13" cy="13" r="8.500" fill="none" stroke="#7d7d7d" stroke-width="5"/><circle cx="13" cy="13" r="8.500" fill="none" stroke="#dcdcdc" stroke-width="3.600"/></svg>
<div class="selb" style="left:40px;top:37px"></div>
<svg class="i" style="left:43px;top:40px;width:26px;height:26px" viewBox="0 0 26 26"><use href="#to"/><path d="M13 10v6.400M9.800 13.200h6.400" stroke="#8a8a8a" stroke-width="3"/><path d="M13 10.800v4.800M10.600 13.200h4.800" stroke="#f0f0f0" stroke-width="1.500"/></svg>
<svg class="i" style="left:76px;top:40px;width:26px;height:26px" viewBox="0 0 26 26"><use href="#to"/><circle cx="10.500" cy="10.500" r="6.300" fill="none" stroke="#7d7d7d" stroke-width="3.800"/><circle cx="10.500" cy="10.500" r="6.300" fill="none" stroke="#dcdcdc" stroke-width="2.400"/><circle cx="16.500" cy="15.500" r="6.300" fill="none" stroke="#7d7d7d" stroke-width="3.800"/><circle cx="16.500" cy="15.500" r="6.300" fill="none" stroke="#dcdcdc" stroke-width="2.400"/></svg>
<svg class="i" style="left:109px;top:40px;width:26px;height:26px" viewBox="0 0 26 26"><use href="#to"/><path d="M5 7 C8 3 17 3 17 8 C17 12 10 14 11 19 C12 23 18 22 22 21" fill="none" stroke="#7d7d7d" stroke-width="3.8" stroke-linecap="round" stroke-linejoin="round" /><path d="M5 7 C8 3 17 3 17 8 C17 12 10 14 11 19 C12 23 18 22 22 21" fill="none" stroke="#dedede" stroke-width="2.4" stroke-linecap="round" stroke-linejoin="round" /></svg>
<svg class="i" style="left:10px;top:73px;width:26px;height:26px" viewBox="0 0 26 26"><use href="#to"/><path d="M4 9 C6 3 13 3 12 8 C11 12 5 14 6 19 C7 23 12 22 14 19 C16 15 14 10 17 6 C19 4 22 5 21 9 C20 14 17 19 22 21" fill="none" stroke="#7d7d7d" stroke-width="3.6" stroke-linecap="round" stroke-linejoin="round" /><path d="M4 9 C6 3 13 3 12 8 C11 12 5 14 6 19 C7 23 12 22 14 19 C16 15 14 10 17 6 C19 4 22 5 21 9 C20 14 17 19 22 21" fill="none" stroke="#dedede" stroke-width="2.2" stroke-linecap="round" stroke-linejoin="round" /></svg>
<svg class="i" style="left:43px;top:73px;width:26px;height:26px" viewBox="0 0 26 26"><use href="#to"/><path d="M13.500 12.500 C8 10 9 3.500 13.500 3.500 C18 3.500 19 10 13.500 12.500 C7 15 7.500 23.500 13.500 23.500 C19.500 23.500 20 15 13.500 12.500" fill="none" stroke="#7d7d7d" stroke-width="3.6" stroke-linecap="round" stroke-linejoin="round" /><path d="M13.500 12.500 C8 10 9 3.500 13.500 3.500 C18 3.500 19 10 13.500 12.500 C7 15 7.500 23.500 13.500 23.500 C19.500 23.500 20 15 13.500 12.500" fill="none" stroke="#dedede" stroke-width="2.2" stroke-linecap="round" stroke-linejoin="round" /></svg>
<svg class="i" style="left:76px;top:73px;width:26px;height:26px" viewBox="0 0 26 26"><use href="#to"/><g stroke="#7d7d7d" stroke-width="0.800" fill="#e4e4e4"><path d="M2.500 13.500 l5 -3.500 v2.300 h12 v-2.300 l5 3.500 -5 3.500 v-2.300 h-12 v2.300z"/></g></svg>
<svg class="i" style="left:109px;top:73px;width:26px;height:26px" viewBox="0 0 26 26"><use href="#to"/><g stroke="#7d7d7d" stroke-width="0.800" fill="#e4e4e4"><path d="M3 9 h16.500 v-2.500 l5 3.500 -5 3.500 v-2.500 h-16.500z"/><path d="M24 16 h-16.500 v-2.500 l-5 3.500 5 3.500 v-2.500 h16.500z"/></g></svg>
<svg class="i" style="left:10px;top:106px;width:26px;height:26px" viewBox="0 0 26 26"><use href="#to"/><g stroke="#7d7d7d" stroke-width="0.800" fill="#e4e4e4"><path d="M13.500 2.500 l3.500 5 h-2.300 v12 h2.300 l-3.500 5 -3.500 -5 h2.300 v-12 h-2.300z"/></g></svg>
<svg class="i" style="left:43px;top:106px;width:26px;height:26px" viewBox="0 0 26 26"><use href="#to"/><g stroke="#7d7d7d" stroke-width="0.800" fill="#e4e4e4"><path d="M9 2.500 l3.500 5 h-2.500 v16.500 h-2 v-16.500 h-2.500z"/><path d="M18 24.500 l3.500 -5 h-2.500 v-16.500 h-2 v16.500 h-2.500z"/></g></svg>
<svg class="i" style="left:76px;top:106px;width:26px;height:26px" viewBox="0 0 26 26"><use href="#to"/><g transform="rotate(-20 12 12)"><ellipse cx="11" cy="12" rx="6" ry="9" fill="#2a2a2a"/><ellipse cx="9.500" cy="12" rx="4.500" ry="7.500" fill="#8a8a8a"/><ellipse cx="9" cy="12" rx="2.500" ry="4.500" fill="#3a3a4a"/><ellipse cx="8.500" cy="12" rx="1.200" ry="2.200" fill="#7a80c0"/></g><path d="M18 12 c3 3 3 8 -1 11 M20.500 10 c4 4.500 3 11 -2 15" fill="none" stroke="#4a52b0" stroke-width="1.400"/></svg>
</div>
<div class="g " style="left:5px;top:477px;width:142px;height:74px"><div class="bar "></div>
<div class="gt" style="left:4px;top:11px;letter-spacing:-0.3px">Color Effects</div>
<div class="dsh" style="left:9px;top:34px;width:28px;height:28px"></div>
<svg class="a" style="left:10px;top:35px" width="26" height="26" viewBox="0 0 26 26"><defs><linearGradient id="garr" x1="0" y1="0" x2="1" y2="1"><stop offset="0" stop-color="#18a808"/><stop offset="1" stop-color="#50f020"/></linearGradient></defs><rect width="26" height="26" rx="2.500" fill="#70727a"/><ellipse cx="2.80" cy="2.80" rx="1.350" ry="1.150" fill="#ff1010"/><ellipse cx="2.80" cy="5.72" rx="1.350" ry="1.150" fill="#ff1010"/><ellipse cx="2.80" cy="8.64" rx="1.350" ry="1.150" fill="#ff1010"/><ellipse cx="2.80" cy="11.56" rx="1.350" ry="1.150" fill="#ff1010"/><ellipse cx="2.80" cy="14.48" rx="1.350" ry="1.150" fill="#ff1010"/><ellipse cx="2.80" cy="17.40" rx="1.350" ry="1.150" fill="#ff1010"/><ellipse cx="2.80" cy="20.32" rx="1.350" ry="1.150" fill="#ff1010"/><ellipse cx="2.80" cy="23.24" rx="1.350" ry="1.150" fill="#ff1010"/><ellipse cx="5.72" cy="2.80" rx="1.350" ry="1.150" fill="#ffee00"/><ellipse cx="5.72" cy="5.72" rx="1.350" ry="1.150" fill="#ffee00"/><ellipse cx="5.72" cy="8.64" rx="1.350" ry="1.150" fill="#ffee00"/><ellipse cx="5.72" cy="11.56" rx="1.350" ry="1.150" fill="#ffee00"/><ellipse cx="5.72" cy="14.48" rx="1.350" ry="1.150" fill="#ffee00"/><ellipse cx="5.72" cy="17.40" rx="1.350" ry="1.150" fill="#ffee00"/><ellipse cx="5.72" cy="20.32" rx="1.350" ry="1.150" fill="#ffee00"/><ellipse cx="5.72" cy="23.24" rx="1.350" ry="1.150" fill="#ffee00"/><ellipse cx="8.64" cy="2.80" rx="1.350" ry="1.150" fill="#30e020"/><ellipse cx="8.64" cy="5.72" rx="1.350" ry="1.150" fill="#30e020"/><ellipse cx="8.64" cy="8.64" rx="1.350" ry="1.150" fill="#30e020"/><ellipse cx="8.64" cy="11.56" rx="1.350" ry="1.150" fill="#30e020"/><ellipse cx="8.64" cy="14.48" rx="1.350" ry="1.150" fill="#30e020"/><ellipse cx="8.64" cy="17.40" rx="1.350" ry="1.150" fill="#30e020"/><ellipse cx="8.64" cy="20.32" rx="1.350" ry="1.150" fill="#30e020"/><ellipse cx="8.64" cy="23.24" rx="1.350" ry="1.150" fill="#30e020"/><ellipse cx="11.56" cy="2.80" rx="1.350" ry="1.150" fill="#10e890"/><ellipse cx="11.56" cy="5.72" rx="1.350" ry="1.150" fill="#10e890"/><ellipse cx="11.56" cy="8.64" rx="1.350" ry="1.150" fill="#10e890"/><ellipse cx="11.56" cy="11.56" rx="1.350" ry="1.150" fill="#10e890"/><ellipse cx="11.56" cy="14.48" rx="1.350" ry="1.150" fill="#10e890"/><ellipse cx="11.56" cy="17.40" rx="1.350" ry="1.150" fill="#10e890"/><ellipse cx="11.56" cy="20.32" rx="1.350" ry="1.150" fill="#10e890"/><ellipse cx="11.56" cy="23.24" rx="1.350" ry="1.150" fill="#10e890"/><ellipse cx="14.48" cy="2.80" rx="1.350" ry="1.150" fill="#20b8f8"/><ellipse cx="14.48" cy="5.72" rx="1.350" ry="1.150" fill="#20b8f8"/><ellipse cx="14.48" cy="8.64" rx="1.350" ry="1.150" fill="#20b8f8"/><ellipse cx="14.48" cy="11.56" rx="1.350" ry="1.150" fill="#20b8f8"/><ellipse cx="14.48" cy="14.48" rx="1.350" ry="1.150" fill="#20b8f8"/><ellipse cx="14.48" cy="17.40" rx="1.350" ry="1.150" fill="#20b8f8"/><ellipse cx="14.48" cy="20.32" rx="1.350" ry="1.150" fill="#20b8f8"/><ellipse cx="14.48" cy="23.24" rx="1.350" ry="1.150" fill="#20b8f8"/><ellipse cx="17.40" cy="2.80" rx="1.350" ry="1.150" fill="#1020f0"/><ellipse cx="17.40" cy="5.72" rx="1.350" ry="1.150" fill="#1020f0"/><ellipse cx="17.40" cy="8.64" rx="1.350" ry="1.150" fill="#1020f0"/><ellipse cx="17.40" cy="11.56" rx="1.350" ry="1.150" fill="#1020f0"/><ellipse cx="17.40" cy="14.48" rx="1.350" ry="1.150" fill="#1020f0"/><ellipse cx="17.40" cy="17.40" rx="1.350" ry="1.150" fill="#1020f0"/><ellipse cx="17.40" cy="20.32" rx="1.350" ry="1.150" fill="#1020f0"/><ellipse cx="17.40" cy="23.24" rx="1.350" ry="1.150" fill="#1020f0"/><ellipse cx="20.32" cy="2.80" rx="1.350" ry="1.150" fill="#f018f0"/><ellipse cx="20.32" cy="5.72" rx="1.350" ry="1.150" fill="#f018f0"/><ellipse cx="20.32" cy="8.64" rx="1.350" ry="1.150" fill="#f018f0"/><ellipse cx="20.32" cy="11.56" rx="1.350" ry="1.150" fill="#f018f0"/><ellipse cx="20.32" cy="14.48" rx="1.350" ry="1.150" fill="#f018f0"/><ellipse cx="20.32" cy="17.40" rx="1.350" ry="1.150" fill="#f018f0"/><ellipse cx="20.32" cy="20.32" rx="1.350" ry="1.150" fill="#f018f0"/><ellipse cx="20.32" cy="23.24" rx="1.350" ry="1.150" fill="#f018f0"/><ellipse cx="23.24" cy="2.80" rx="1.350" ry="1.150" fill="#ff1020"/><ellipse cx="23.24" cy="5.72" rx="1.350" ry="1.150" fill="#ff1020"/><ellipse cx="23.24" cy="8.64" rx="1.350" ry="1.150" fill="#ff1020"/><ellipse cx="23.24" cy="11.56" rx="1.350" ry="1.150" fill="#ff1020"/><ellipse cx="23.24" cy="14.48" rx="1.350" ry="1.150" fill="#ff1020"/><ellipse cx="23.24" cy="17.40" rx="1.350" ry="1.150" fill="#ff1020"/><ellipse cx="23.24" cy="20.32" rx="1.350" ry="1.150" fill="#ff1020"/><ellipse cx="23.24" cy="23.24" rx="1.350" ry="1.150" fill="#ff1020"/><path d="M17 9.500 h6.500 v8 h3 l-6.200 8 -6.300 -8 h3z" fill="url(#garr)" stroke="#0c8a04" stroke-width="0.600"/></svg>
</div>
<div class="g dk" style="left:5px;top:553px;width:142px;height:112px"><div class="bar "></div>
<svg class="a" style="left:2px;top:10px" width="34" height="18" viewBox="0 0 34 18"><path d="M5 9 L27 4.500 V12.500 Z" fill="#d8d8d8" stroke="#333" stroke-width="1"/><circle cx="5.500" cy="9" r="4.300" fill="#8a8a8a" stroke="#2a2a2a" stroke-width="1.300"/><rect x="3.800" y="12.500" width="3.400" height="4" fill="#2a2a2a"/><circle cx="27.500" cy="8" r="5.300" fill="#fff" stroke="#2a2a2a" stroke-width="1.300"/><rect x="25.500" y="13" width="4" height="4" fill="#2a2a2a"/></svg>
<div class="gt" style="left:36px;top:11px;letter-spacing:-0.57px">Dimmer</div>
<svg class="i" style="left:115px;top:7px;width:21px;height:21px" viewBox="0 0 26 26"><use href="#tb"/></svg>
<div class="selb" style="left:7px;top:32px"></div>
<svg class="i" style="left:10px;top:35px;width:26px;height:26px" viewBox="0 0 26 26"><use href="#tb"/></svg>
<svg class="i" style="left:43px;top:35px;width:26px;height:26px" viewBox="0 0 26 26"><use href="#tb"/><text x="18" y="10.500" font-family="Liberation Sans,sans-serif" font-weight="bold" font-size="10.500" fill="#c8145e" text-anchor="middle">1</text></svg>
<svg class="i" style="left:76px;top:35px;width:26px;height:26px" viewBox="0 0 26 26"><use href="#tb"/><text x="18" y="10.500" font-family="Liberation Sans,sans-serif" font-weight="bold" font-size="10.500" fill="#c8145e" text-anchor="middle">2</text></svg>
<svg class="i" style="left:109px;top:35px;width:26px;height:26px" viewBox="0 0 26 26"><use href="#dots"/></svg>
<svg class="a" style="left:4px;top:76px" width="30" height="30" viewBox="0 0 30 30"><use href="#sknob"/></svg>
</div>
<div class="g " style="left:5px;top:667px;width:142px;height:74px"><div class="bar "></div>
<svg class="a" style="left:7px;top:7px" width="25" height="25" viewBox="0 0 25 25"><rect x="0.500" y="0.500" width="24" height="24" rx="2" fill="url(#bg2)" stroke="#3f8cf0"/><path d="M2 22 L13 6 l7 5 L8 24z" fill="#fff" opacity="0.300"/><g fill="#fff"><path d="M15 2.500 l6 1.500 1 7 -2.500 2.500 -0.800 -6.200 -5.700 -1.800z"/><path d="M11 6 l5.500 1.500 1 6.500 -2.500 2.500 -0.800 -5.700 -5.200 -1.800z" opacity="0.9"/><path d="M7 10 l5 1.500 1 6 -2.500 2.500 -0.800 -5.200 -4.700 -1.800z" opacity="0.55"/><path d="M3.500 14 l4.500 1.500 1 5.500 -2.500 2.500 -0.800 -4.700 -4.200 -1.800z" opacity="0.3"/></g></svg>
<div class="gt" style="left:36px;top:13px;letter-spacing:-0.24px">Speed Speed</div>
<svg class="a" style="left:4px;top:38px" width="30" height="30" viewBox="0 0 30 30"><use href="#sknob"/></svg>
</div>
<div class="g sel" style="left:148px;top:286px;width:144px;height:152px"><div class="bar "></div>
<svg class="a" style="left:5px;top:4px" width="28" height="29" viewBox="0 0 28 29"><circle cx="13.500" cy="13.500" r="12.400" fill="#fff" stroke="#2a2a2a" stroke-width="1.200"/><path d="M13.500 4.500 L25.500 26 a1 1 0 0 1 -1 1.200 H2.500 a1 1 0 0 1 -1 -1.200z" fill="#3a3a3a"/><path d="M15.500 11.500 l-5 6.500 h3.300 l-2.300 4 -1.200 -0.300 0.700 4 3.600 -2 -1.200 -0.500 4.300 -6.500 h-3.400 l3 -4.500z" fill="#fff"/></svg>
<div class="gt" style="left:36px;top:11px;letter-spacing:0.357px">Shutter</div>
<svg class="a" style="left:9px;top:37px" width="28" height="28" viewBox="0 0 28 28"><circle cx="14" cy="14" r="12.800" fill="#fff" stroke="#1a1a1a" stroke-width="1.200"/></svg>
<div class="a" style="left:42px;top:37px;width:29px;height:29px;background:repeating-linear-gradient(90deg,#e01010 0 3px,#fff 3px 5px) 0 0/100% 1px no-repeat,repeating-linear-gradient(90deg,#e01010 0 3px,#fff 3px 5px) 0 100%/100% 1px no-repeat,repeating-linear-gradient(0deg,#e01010 0 3px,#fff 3px 5px) 0 0/1px 100% no-repeat,repeating-linear-gradient(0deg,#e01010 0 3px,#fff 3px 5px) 100% 0/1px 100% no-repeat"></div>
<svg class="a" style="left:43px;top:38px" width="27" height="27" viewBox="0 0 27 27"><defs><linearGradient id="trg" x1="0" y1="0" x2="0" y2="1"><stop offset="0" stop-color="#2c7cf0"/><stop offset="1" stop-color="#5aa0f6"/></linearGradient></defs><path d="M13.500 1.500 L26 24 a1 1 0 0 1 -0.800 1.500 H1.800 a1 1 0 0 1 -0.800 -1.500z" fill="url(#trg)" stroke="#2a6ed8" stroke-width="0.800"/><path d="M13.500 3 L5 21 C10 17 16 17 22.500 21z" fill="#fff" opacity="0.18"/><path d="M15 9 l-4.500 5.500 h3 l-2 3.500 -1.200 -0.400 0.800 4 3.400 -2.200 -1.200 -0.400 3.700 -5.500 h-3 l2.500 -4z" fill="#fff"/></svg>
<svg class="i" style="left:76px;top:38px;width:26px;height:26px" viewBox="0 0 26 26"><use href="#dots"/></svg>
<svg class="i" style="left:109px;top:38px;width:26px;height:26px" viewBox="0 0 26 26"><use href="#dots"/></svg>
<svg class="i" style="left:10px;top:71px;width:26px;height:26px" viewBox="0 0 26 26"><use href="#dots"/></svg>
<svg class="a" style="left:4px;top:114px" width="30" height="30" viewBox="0 0 30 30"><use href="#sknob"/></svg>
</div>
<div class="g " style="left:149px;top:439px;width:142px;height:150px"><div class="bar "></div>
<div class="gt" style="left:4px;top:11px;letter-spacing:-0.225px">Autos XY</div>
<div class="dsh" style="left:9px;top:39px;width:29px;height:29px"></div>
<svg class="i" style="left:10px;top:40px;width:27px;height:27px" viewBox="0 0 27 27"><use href="#nofunc"/></svg>
<svg class="i" style="left:43px;top:40px;width:27px;height:27px" viewBox="0 0 27 27"><use href="#tl"/><g stroke="#50505e" stroke-width="0.900" fill="#f6f6f6"><path d="M10 8.500 l2.600 3 h-1.600 v4.500 h5 v-1.600 l3 2.600 -3 2.600 v-1.600 h-5 v4.500 h1.600 l-2.600 3 -2.600 -3 h1.600 v-4.500 h-4.500 v1.600 l-3 -2.600 3 -2.600 v1.600 h4.500 v-4.500 h-1.600z"/></g><text x="20" y="12" font-family="Liberation Sans,sans-serif" font-weight="bold" font-size="11" fill="#fff" stroke="#3a3a4a" stroke-width="1" paint-order="stroke" text-anchor="middle" style="letter-spacing:-0.6px">01</text></svg>
<svg class="i" style="left:76px;top:40px;width:27px;height:27px" viewBox="0 0 27 27"><use href="#tl"/><g stroke="#50505e" stroke-width="0.900" fill="#f6f6f6"><path d="M10 8.500 l2.600 3 h-1.600 v4.500 h5 v-1.600 l3 2.600 -3 2.600 v-1.600 h-5 v4.500 h1.600 l-2.600 3 -2.600 -3 h1.600 v-4.500 h-4.500 v1.600 l-3 -2.600 3 -2.600 v1.600 h4.500 v-4.500 h-1.600z"/></g><text x="20" y="12" font-family="Liberation Sans,sans-serif" font-weight="bold" font-size="11" fill="#fff" stroke="#3a3a4a" stroke-width="1" paint-order="stroke" text-anchor="middle" style="letter-spacing:-0.6px">02</text></svg>
<svg class="i" style="left:109px;top:40px;width:27px;height:27px" viewBox="0 0 27 27"><use href="#tl"/><g stroke="#50505e" stroke-width="0.900" fill="#f6f6f6"><path d="M10 8.500 l2.600 3 h-1.600 v4.500 h5 v-1.600 l3 2.600 -3 2.600 v-1.600 h-5 v4.500 h1.600 l-2.600 3 -2.600 -3 h1.600 v-4.500 h-4.500 v1.600 l-3 -2.600 3 -2.600 v1.600 h4.500 v-4.500 h-1.600z"/></g><text x="20" y="12" font-family="Liberation Sans,sans-serif" font-weight="bold" font-size="11" fill="#fff" stroke="#3a3a4a" stroke-width="1" paint-order="stroke" text-anchor="middle" style="letter-spacing:-0.6px">03</text></svg>
<svg class="i" style="left:10px;top:73px;width:27px;height:27px" viewBox="0 0 27 27"><use href="#tl"/><g stroke="#50505e" stroke-width="0.900" fill="#f6f6f6"><path d="M10 8.500 l2.600 3 h-1.600 v4.500 h5 v-1.600 l3 2.600 -3 2.600 v-1.600 h-5 v4.500 h1.600 l-2.600 3 -2.600 -3 h1.600 v-4.500 h-4.500 v1.600 l-3 -2.600 3 -2.600 v1.600 h4.500 v-4.500 h-1.600z"/></g><text x="20" y="12" font-family="Liberation Sans,sans-serif" font-weight="bold" font-size="11" fill="#fff" stroke="#3a3a4a" stroke-width="1" paint-order="stroke" text-anchor="middle" style="letter-spacing:-0.6px">04</text></svg>
<svg class="i" style="left:43px;top:73px;width:27px;height:27px" viewBox="0 0 27 27"><use href="#spk"/></svg>
<svg class="i" style="left:76px;top:73px;width:27px;height:27px" viewBox="0 0 27 27"><use href="#note"/></svg>
<svg class="i" style="left:109px;top:73px;width:27px;height:27px" viewBox="0 0 27 27"><use href="#spk"/></svg>
<svg class="i" style="left:10px;top:106px;width:27px;height:27px" viewBox="0 0 27 27"><use href="#note"/></svg>
</div>
<div class="g " style="left:149px;top:591px;width:142px;height:74px"><div class="bar "></div>
<svg class="a" style="left:7px;top:7px" width="25" height="25" viewBox="0 0 25 25"><rect x="0.500" y="0.500" width="24" height="24" rx="2" fill="url(#bg2)" stroke="#3f8cf0"/><path d="M2 22 L13 6 l7 5 L8 24z" fill="#fff" opacity="0.300"/><g fill="#fff"><path d="M15 2.500 l6 1.500 1 7 -2.500 2.500 -0.800 -6.200 -5.700 -1.800z"/><path d="M11 6 l5.500 1.500 1 6.500 -2.500 2.500 -0.800 -5.700 -5.200 -1.800z" opacity="0.9"/><path d="M7 10 l5 1.500 1 6 -2.500 2.500 -0.800 -5.200 -4.700 -1.800z" opacity="0.55"/><path d="M3.500 14 l4.500 1.500 1 5.500 -2.500 2.500 -0.800 -4.700 -4.200 -1.800z" opacity="0.3"/></g></svg>
<div class="gt" style="left:36px;top:13px;letter-spacing:-0.145px">A XY Speed Sp...</div>
<svg class="a" style="left:4px;top:38px" width="30" height="30" viewBox="0 0 30 30"><use href="#sknob"/></svg>
</div>
<div class="g " style="left:293px;top:287px;width:142px;height:150px"><div class="bar "></div>
<div class="gt" style="left:4px;top:11px;letter-spacing:-0.126px">Autos Color</div>
<div class="dsh" style="left:9px;top:39px;width:29px;height:29px"></div>
<svg class="i" style="left:10px;top:40px;width:27px;height:27px" viewBox="0 0 27 27"><use href="#nofunc"/></svg>
<svg class="i" style="left:43px;top:40px;width:27px;height:27px" viewBox="0 0 27 27"><use href="#tv"/><g><path d="M13.500 14 L3.500 12 A10.500 10.500 0 0 0 8 23z" fill="#f03030"/><path d="M13.500 14 L8 23 A10.500 10.500 0 0 0 19 23z" fill="#4a5af0"/><path d="M13.500 14 L19 23 A10.500 10.500 0 0 0 23.500 12z" fill="#30d848"/></g><g font-family="Liberation Sans,sans-serif" font-weight="bold" fill="#fff" stroke="#0a0a0a" stroke-width="1.500" paint-order="stroke" stroke-linejoin="round" text-anchor="middle"><text x="13.500" y="11.800" font-size="10.500" style="letter-spacing:-0.55px">Color</text><text x="13.500" y="24" font-size="12.500" style="letter-spacing:-0.2px">01</text></g></svg>
<svg class="i" style="left:76px;top:40px;width:27px;height:27px" viewBox="0 0 27 27"><use href="#tv"/><g><path d="M13.500 14 L3.500 12 A10.500 10.500 0 0 0 8 23z" fill="#f03030"/><path d="M13.500 14 L8 23 A10.500 10.500 0 0 0 19 23z" fill="#4a5af0"/><path d="M13.500 14 L19 23 A10.500 10.500 0 0 0 23.500 12z" fill="#30d848"/></g><g font-family="Liberation Sans,sans-serif" font-weight="bold" fill="#fff" stroke="#0a0a0a" stroke-width="1.500" paint-order="stroke" stroke-linejoin="round" text-anchor="middle"><text x="13.500" y="11.800" font-size="10.500" style="letter-spacing:-0.55px">Color</text><text x="13.500" y="24" font-size="12.500" style="letter-spacing:-0.2px">02</text></g></svg>
<svg class="i" style="left:109px;top:40px;width:27px;height:27px" viewBox="0 0 27 27"><use href="#tv"/><g><path d="M13.500 14 L3.500 12 A10.500 10.500 0 0 0 8 23z" fill="#f03030"/><path d="M13.500 14 L8 23 A10.500 10.500 0 0 0 19 23z" fill="#4a5af0"/><path d="M13.500 14 L19 23 A10.500 10.500 0 0 0 23.500 12z" fill="#30d848"/></g><g font-family="Liberation Sans,sans-serif" font-weight="bold" fill="#fff" stroke="#0a0a0a" stroke-width="1.500" paint-order="stroke" stroke-linejoin="round" text-anchor="middle"><text x="13.500" y="11.800" font-size="10.500" style="letter-spacing:-0.55px">Color</text><text x="13.500" y="24" font-size="12.500" style="letter-spacing:-0.2px">03</text></g></svg>
<svg class="i" style="left:10px;top:73px;width:27px;height:27px" viewBox="0 0 27 27"><use href="#tv"/><g><path d="M13.500 14 L3.500 12 A10.500 10.500 0 0 0 8 23z" fill="#f03030"/><path d="M13.500 14 L8 23 A10.500 10.500 0 0 0 19 23z" fill="#4a5af0"/><path d="M13.500 14 L19 23 A10.500 10.500 0 0 0 23.500 12z" fill="#30d848"/></g><g font-family="Liberation Sans,sans-serif" font-weight="bold" fill="#fff" stroke="#0a0a0a" stroke-width="1.500" paint-order="stroke" stroke-linejoin="round" text-anchor="middle"><text x="13.500" y="11.800" font-size="10.500" style="letter-spacing:-0.55px">Color</text><text x="13.500" y="24" font-size="12.500" style="letter-spacing:-0.2px">04</text></g></svg>
<svg class="i" style="left:43px;top:73px;width:27px;height:27px" viewBox="0 0 27 27"><use href="#spk"/></svg>
<svg class="i" style="left:76px;top:73px;width:27px;height:27px" viewBox="0 0 27 27"><use href="#note"/></svg>
<svg class="i" style="left:109px;top:73px;width:27px;height:27px" viewBox="0 0 27 27"><use href="#spk"/></svg>
<svg class="i" style="left:10px;top:106px;width:27px;height:27px" viewBox="0 0 27 27"><use href="#note"/></svg>
<svg class="i" style="left:43px;top:106px;width:27px;height:27px" viewBox="0 0 27 27"><use href="#spk"/></svg>
</div>
<div class="g " style="left:293px;top:439px;width:142px;height:74px"><div class="bar "></div>
<svg class="a" style="left:7px;top:7px" width="25" height="25" viewBox="0 0 25 25"><rect x="0.500" y="0.500" width="24" height="24" rx="2" fill="url(#bg2)" stroke="#3f8cf0"/><path d="M2 22 L13 6 l7 5 L8 24z" fill="#fff" opacity="0.300"/><g fill="#fff"><path d="M15 2.500 l6 1.500 1 7 -2.500 2.500 -0.800 -6.200 -5.700 -1.800z"/><path d="M11 6 l5.500 1.500 1 6.500 -2.500 2.500 -0.800 -5.700 -5.200 -1.800z" opacity="0.9"/><path d="M7 10 l5 1.500 1 6 -2.500 2.500 -0.800 -5.200 -4.700 -1.800z" opacity="0.55"/><path d="M3.500 14 l4.500 1.500 1 5.500 -2.500 2.500 -0.800 -4.700 -4.200 -1.800z" opacity="0.3"/></g></svg>
<div class="gt" style="left:36px;top:13px;letter-spacing:-0.138px">A Col Speed S...</div>
<svg class="a" style="left:4px;top:38px" width="30" height="30" viewBox="0 0 30 30"><use href="#sknob"/></svg>
</div>
<div class="g " style="left:293px;top:515px;width:142px;height:74px"><div class="bar "></div>
<div class="gt" style="left:4px;top:11px;letter-spacing:-0.284px">Reset</div>
<div class="dsh" style="left:9px;top:34px;width:29px;height:29px"></div>
<svg class="i" style="left:10px;top:35px;width:27px;height:27px" viewBox="0 0 27 27"><use href="#nofunc"/></svg>
<svg class="i" style="left:43px;top:35px;width:26px;height:26px" viewBox="0 0 26 26"><rect x="0.500" y="0.500" width="25" height="25" rx="1.500" fill="url(#bg2)" stroke="#3f8cf0"/><g fill="#fff" font-family="Liberation Sans,sans-serif" font-weight="bold" text-anchor="middle"><text x="13" y="13.500" font-size="14" style="letter-spacing:-0.3px">RE</text><text x="13" y="23" font-size="8.500" style="letter-spacing:0.4px">SET</text></g></svg>
</div>
<!--OTHER-END-->
<!--COLORMIX-START-->
<!-- COLOR MIXING PANEL -->
<div class="a" style="left:450px;top:261px;width:920px;height:489px;border:1px solid #757983;border-top-color:#eceef4;border-radius:3px;background:linear-gradient(#b7becd,#a8afc2);box-shadow:inset 1px 0 0 #e4e7ee,inset 0 -1px 0 #d8dbe4"></div>
<div class="pnlh" style="left:451px;top:262px;width:918px"></div>
<div class="t" style="left:867.4px;top:265px;color:#fff;font-weight:bold;font-size:13px;letter-spacing:-0.354px;text-shadow:0 0 1.5px rgba(255,255,255,.45)">Color mixing</div>
<!-- wheel -->
<div class="a" style="left:464px;top:298px;width:362px;height:362px;border-radius:50%;background:radial-gradient(circle closest-side,rgba(0,0,0,0) 84%,rgba(0,0,0,.08) 90%,rgba(0,0,0,.28) 96%,rgba(0,0,0,.58) 100%),radial-gradient(circle closest-side,#fff 0,rgba(255,255,255,.9) 10%,rgba(255,255,255,0) 94%),conic-gradient(from 90deg,#ff0000,#ff00ff,#0000ff,#00ffff,#00ff00,#ffff00,#ff0000);box-shadow:0 0 1px rgba(40,40,40,.7)"></div>
<svg class="a" style="left:713px;top:597px" width="15" height="15" viewBox="0 0 15 15"><g fill="none" stroke="#000" stroke-width="0.9"><circle cx="7.500" cy="7.500" r="3.300"/><path d="M2.500 2.500l10 10M12.500 2.500l-10 10"/></g></svg>
<!-- magenta slider -->
<div class="a" style="left:851px;top:304px;width:39px;height:307px;background:linear-gradient(90deg,#858585 0,#505050 1px,#3a3a3a 3px,#2c2c2c 5px,transparent 5px,transparent 36px,#a0a0a0 36px,#8c8c8c 39px)"></div>
<div class="a" style="left:851px;top:608px;width:39px;height:3px;background:linear-gradient(#555,#8a8a8a)"></div>
<div class="a" style="left:856px;top:308px;width:31px;height:300px;background:linear-gradient(#f32df0 0,#e82ae6 12%,#b021ae 35%,#5c125c 62%,#220724 85%,#050106 100%)"></div>
<div class="a" style="left:856px;top:302px;width:31px;height:7px;background:linear-gradient(#7e7e7e,#b4b4b4);border:2px solid #3b3226;border-bottom:0"></div>
<div class="a" style="left:856px;top:309px;width:31px;height:6px;background:#f32df0;border:2px solid #10d818;border-top:0"></div>
<!-- grey slider -->
<div class="a" style="left:906px;top:304px;width:39px;height:307px;background:linear-gradient(90deg,#858585 0,#505050 1px,#3a3a3a 3px,#2c2c2c 4px,transparent 4px,transparent 35px,#a0a0a0 35px,#8c8c8c 39px)"></div>
<div class="a" style="left:906px;top:304px;width:39px;height:5px;background:linear-gradient(#9a9a9a,#6a6a6a)"></div>
<div class="a" style="left:906px;top:608px;width:39px;height:3px;background:linear-gradient(#555,#8a8a8a)"></div>
<div class="a" style="left:910px;top:309px;width:31px;height:299px;background:linear-gradient(#ffffff 0,#ececec 12%,#b0b0b0 35%,#6a6a6a 60%,#3a3a3a 80%,#1e1e1e 90%,#0a0a0a 100%)"></div>
<div class="a" style="left:910px;top:546px;width:31px;height:13px;border:2px solid #cfcfcf;background:#323232"></div>
<svg class="a" style="left:910px;top:576px" width="31" height="32" viewBox="0 0 31 32"><g fill="#fff"><path d="M31 3.500 l-3 -1 -1.500 2.800 -3 -1.600 -1.600 2.800 -2.800 -0.300 -0.200 3.300 -2.800 1 1 3 -2 2.300 2.300 2.400 -0.800 3 3 1 0.600 3 3.200 -0.500 1.800 2.600 2.800 -1.600 3 1.300z"/><path d="M0.500 9.500 l4 0.500 2 1.500 3 -1 2.500 3 -1 1.500 2 3 -1 5 -2.500 0.500 -1 -4 -2 -2.500 -3.500 -0.500 -2.500 -2.500z"/></g><circle cx="29" cy="15.500" r="7.800" fill="#161616"/></svg>
<!-- preview -->
<div class="a" style="left:851px;top:623px;width:94px;height:32px;background:linear-gradient(#6a6a6a,#7a7a7a 4px,#8a8a8a 28px,#777 32px)"></div>
<div class="a" style="left:851px;top:624px;width:5px;height:30px;background:linear-gradient(90deg,#6c6c6c,#484848)"></div>
<div class="a" style="left:940px;top:624px;width:5px;height:30px;background:linear-gradient(90deg,#8c8c8c,#808080)"></div>
<div class="a" style="left:856px;top:627px;width:84px;height:24px;background:#ff44fc"></div>
<!-- spinboxes -->
<style>
.sl{position:absolute;top:691px;font-weight:bold;font-size:14px;color:#dde0e8;line-height:16px;white-space:nowrap}
.sb{position:absolute;top:688px;width:51px;height:22px;border:1px solid #2c2c2c;background:#fff;font-size:11px;line-height:20px;color:#000}
.sb span{position:absolute;left:0;width:33px;text-align:center}
.sb i{position:absolute;right:0;top:0;width:17px;height:20px;border-left:1px solid #3a3a3a;background:linear-gradient(#dfe1ea,#c9ccda)}
.sb i:before{content:"";position:absolute;left:5px;top:5px;border:3px solid transparent;border-top:0;border-bottom:4px solid #111}
.sb i:after{content:"";position:absolute;left:5px;bottom:4px;border:3px solid transparent;border-bottom:0;border-top:4px solid #111}
.sb b{position:absolute;right:0;top:10px;width:16px;height:1px;background:#9a9cac}
.sb.dis{color:#808080}
.sb.dis i{background:linear-gradient(#e6e8ef,#d6d8e4);border-left-color:#777}
.sb.dis i:before{border-bottom-color:#f4f4f8}
.sb.dis i:after{border-top-color:#f4f4f8}
</style>
<div class="sl" style="left:464px">R:</div><div class="sb" style="left:482px"><span>255</span><i></i><b></b></div>
<div class="sl" style="left:543px">G:</div><div class="sb" style="left:562px"><span>47</span><i></i><b></b></div>
<div class="sl" style="left:623px">B:</div><div class="sb" style="left:642px"><span>251</span><i></i><b></b></div>
<div class="sl" style="left:702px">W:</div><div class="sb dis" style="left:722px"><span>47</span><i></i><b></b></div>
<!-- XY panel header -->
<div class="a" style="left:450px;top:750px;width:920px;height:30px;border:1px solid #757983;border-top-color:#eceef4;border-radius:3px;background:linear-gradient(#636363,#8c8c8c 12px,#ababab 22px)"></div>
<div class="t" style="left:898px;top:753px;color:#fff;font-weight:bold;font-size:13px">XY</div>
<!--COLORMIX-END-->
<!--EASYVIEW-START-->
<!-- EASY VIEW WINDOW -->
<style>
.ev{position:absolute;white-space:nowrap;line-height:13px;font-size:11.5px;color:#15428b;text-align:center;letter-spacing:-0.1px;text-shadow:0 0 0.6px rgba(21,66,139,.55)}
.evg{position:absolute;top:203px;height:85px;border:1px solid #9fbfe6;border-radius:3px;background:linear-gradient(#dde9f8 0,#d3e2f5 15px,#c4d8f2 16px,#d5e4f6 66px,#dbe8f8 68px);box-shadow:0 0 0 1px rgba(235,243,253,.8);overflow:hidden}
.evg .lab{position:absolute;left:0;right:0;bottom:0;height:16px;background:#c0d7f3;color:#3f66a8;text-align:center;font-size:11.5px;line-height:16px;letter-spacing:0.2px}
</style>
<div class="a" style="left:951px;top:146px;width:390px;height:601px;border-radius:6px 6px 3px 3px;background:linear-gradient(90deg,#c2d0e6 0,#dde7f5 2px,#cfdcf0 4px,#c3d6f0 6px,#c3d6f0 384px,#cfdcf0 386px,#dde7f5 388px,#b8c8e0 390px);box-shadow:0 0 3px rgba(30,40,60,.5)"></div>
<div class="a" style="left:952px;top:147px;width:388px;height:30px;border-radius:5px 5px 0 0;background:linear-gradient(#e4ebf6 0,#dae4f3 8px,#d0ddf0 30px)"></div>
<div class="a" style="left:952px;top:176px;width:388px;height:24px;background:#bfd9f8"></div>
<!-- ribbon frame -->
<div class="a" style="left:956px;top:199px;width:381px;height:91px;border:1px solid #8db2e3;border-radius:3px;background:linear-gradient(#c9ddf6,#c3d9f4 50%,#cfe1f8)"></div>
<!-- qat pill -->
<div class="a" style="left:984px;top:152px;width:95px;height:22px;border:1px solid #b3c4dc;border-radius:0 11px 11px 0;background:linear-gradient(#eef3fa,#dfe8f5)"></div>
<!-- orb -->
<svg class="a" style="left:957px;top:152px" width="42" height="42" viewBox="0 0 42 42"><defs><radialGradient id="evo" cx="0.5" cy="0.35" r="0.7"><stop offset="0" stop-color="#4a4a4a"/><stop offset="0.5" stop-color="#1c1c1c"/><stop offset="1" stop-color="#000"/></radialGradient><linearGradient id="evr" x1="0" y1="0" x2="0" y2="1"><stop offset="0" stop-color="#f6f6f6"/><stop offset="0.5" stop-color="#b8bcc4"/><stop offset="1" stop-color="#f0f0f0"/></linearGradient></defs><circle cx="20.500" cy="20.500" r="19" fill="url(#evr)" stroke="#8a92a4" stroke-width="0.800"/><circle cx="20.500" cy="20.500" r="14.800" fill="url(#evo)" stroke="#6a6e78" stroke-width="0.800"/><g fill="#fff" opacity="0.85"><circle cx="9.500" cy="14" r="0.900"/><circle cx="11.500" cy="11" r="1"/><circle cx="14.500" cy="8.800" r="1"/><circle cx="18" cy="7.500" r="0.900"/><circle cx="12.500" cy="15" r="0.700"/><circle cx="14.500" cy="12" r="0.700"/><circle cx="17.500" cy="10.300" r="0.700"/></g><text x="20.700" y="25.500" font-family="Liberation Sans,sans-serif" font-weight="bold" font-size="13.500" fill="#fff" text-anchor="middle" style="letter-spacing:-0.5px">3D</text></svg>
<!-- qat icons -->
<svg class="a" style="left:1007px;top:154px" width="16" height="18" viewBox="0 0 16 18"><path d="M1.500 1 h8.500 l4 4 v12 h-12.500z" fill="#f2f6ff" stroke="#3a4a6a" stroke-width="1"/><path d="M10 1 v4 h4" fill="#c8d4ec" stroke="#3a4a6a" stroke-width="0.800"/></svg>
<svg class="a" style="left:1028px;top:153px" width="19" height="18" viewBox="0 0 19 18"><path d="M1 4 h5 l1.500 2 h8 v10.500 h-14.500z" fill="#e8b830" stroke="#a07818" stroke-width="0.800"/><path d="M1 16.500 l3 -8 h14 l-3 8z" fill="#f8dc6a" stroke="#a07818" stroke-width="0.800"/><path d="M9 3.500 c2 -2.500 5 -2.500 6.500 -0.500 l1.200 -1 v3.800 h-3.800 l1.300 -1.200 c-1 -1.400 -3 -1.300 -4.200 0z" fill="#4a78c8"/></svg>
<svg class="a" style="left:1052px;top:155px" width="15" height="15" viewBox="0 0 15 15"><rect x="0.500" y="0.500" width="14" height="14" rx="1" fill="#4a48b8" stroke="#2a2880"/><rect x="3" y="1" width="9" height="5.500" fill="#f0f0fa"/><rect x="3.500" y="9" width="8" height="5.500" fill="#c8c8e0"/><rect x="5" y="10" width="2.500" height="3.500" fill="#3a38a0"/></svg>
<svg class="a" style="left:1085px;top:158px" width="8" height="8" viewBox="0 0 8 8"><rect x="0.500" y="0.500" width="7" height="1.500" fill="#20305c"/><path d="M0.500 3.500h7l-3.500 4z" fill="#20305c"/></svg>
<div class="t" style="left:1097px;top:156px;font-size:12px;color:#8d97aa;letter-spacing:-0.144px;white-space:pre">Easy View   Copyright (c) Nicol...</div>
<div class="a" style="left:1276px;top:165px;width:8px;height:2px;background:#9ba5b6"></div>
<div class="a" style="left:1298px;top:158px;width:10px;height:8px;border:1px solid #9ba5b6;border-top-width:3px"></div>
<svg class="a" style="left:1320px;top:158px" width="12" height="10" viewBox="0 0 12 10"><path d="M1.500 1l8.500 8M10 1l-8.500 8" stroke="#a3adbd" stroke-width="1.800"/></svg>
<!-- tabs -->
<div class="a" style="left:1003px;top:178px;width:47px;height:23px;border:1px solid #8db2e3;border-bottom:0;border-radius:3px 3px 0 0;background:linear-gradient(#f6f9fe,#e3edfb 60%,#cfe0f7);overflow:hidden"><div class="t" style="left:2px;top:5px;font-size:11.5px;color:#15428b;letter-spacing:0.289px">Standard</div></div>
<div class="a" style="left:1051px;top:179px;width:1px;height:20px;background:#9fbfe6"></div>
<div class="t" style="left:1060px;top:184px;font-size:11.5px;color:#15428b;letter-spacing:-0.684px">Camera</div>
<div class="t" style="left:1118px;top:184px;font-size:11.5px;color:#15428b;letter-spacing:-0.155px">View</div>
<div class="t" style="left:1165px;top:184px;font-size:11.5px;color:#15428b;letter-spacing:0.034px">Mouse</div>
<div class="a" style="left:1213px;top:180px;width:46px;height:18px;overflow:hidden"><div class="t" style="left:0;top:4px;font-size:11.5px;color:#15428b;letter-spacing:-0.12px">Rendering</div></div>
<div class="a" style="left:1261px;top:178px;width:1px;height:20px;background:#9ab5da"></div>
<div class="t" style="left:1267px;top:184px;font-size:11.5px;color:#15428b">?</div>
<svg class="a" style="left:1277px;top:186px" width="6" height="4" viewBox="0 0 6 4"><path d="M0 0h6l-3 3.500z" fill="#56749f"/></svg>
<div class="t" style="left:1286px;top:184px;font-size:11.5px;color:#15428b;letter-spacing:0.151px">Options</div>
<svg class="a" style="left:1329px;top:186px" width="6" height="4" viewBox="0 0 6 4"><path d="M0 0h6l-3 3.500z" fill="#56749f"/></svg>
<!-- groups -->
<div class="evg" style="left:959px;width:122px"><div class="lab">Mode</div></div>
<div class="evg" style="left:1084px;width:104px"><div class="lab">DMX</div></div>
<div class="evg" style="left:1191px;width:49px"></div>
<div class="evg" style="left:1243px;width:42px"></div>
<!-- helmet -->
<svg class="a" style="left:981px;top:208px" width="35" height="28" viewBox="0 0 35 28"><defs><radialGradient id="hel" cx="0.4" cy="0.3" r="0.8"><stop offset="0" stop-color="#ffe27a"/><stop offset="0.5" stop-color="#f6b21c"/><stop offset="1" stop-color="#d88a08"/></radialGradient></defs><ellipse cx="17" cy="25" rx="14" ry="2.500" fill="#8090b0" opacity="0.35"/><path d="M4 20 C3 9 10 2 19 2 C27 2 32 8 32 16 L33.500 19 C28 22 22 23 17 23.500 C11 24.500 6 24 4 20z" fill="url(#hel)" stroke="#b87404" stroke-width="0.800"/><path d="M2 20.500 C8 24 20 21 33.500 17 L34 19.500 C24 24 10 27.500 2.500 24z" fill="#f8c840" stroke="#b87404" stroke-width="0.800"/><path d="M14 3.500 C11 9 11 15 12 21 M20 2.500 C19 8 19 14 20 20.500" stroke="#fff3b0" stroke-width="1.400" fill="none" opacity="0.8"/><ellipse cx="11" cy="8" rx="4" ry="3" fill="#fff" opacity="0.55" transform="rotate(-35 11 8)"/></svg>
<div class="ev" style="left:948.5px;width:100px;top:243px;"><span style="letter-spacing:0.136px">Construction</span><br><span style="letter-spacing:-0.095px">mode</span></div>
<!-- user mode -->
<div class="a" style="left:1035px;top:204px;width:43px;height:67px;border:1px solid #c8a05a;border-radius:2px;background:linear-gradient(#fcdcaa 0,#fbc77c 24px,#fbad48 25px,#fcb85a 45px,#fdd88a 58px,#fdef9f 66px);box-shadow:inset 0 0 0 1px rgba(255,240,200,.6)"></div>
<svg class="a" style="left:1042px;top:213px" width="28" height="20" viewBox="0 0 28 20"><defs><radialGradient id="iris" cx="0.5" cy="0.5" r="0.5"><stop offset="0" stop-color="#101830"/><stop offset="0.35" stop-color="#0c1024"/><stop offset="0.45" stop-color="#2a58b8"/><stop offset="1" stop-color="#1a3a8a"/></radialGradient></defs><path d="M1 10.500 C6 2 22 2 27 10.500 C22 18.500 6 18.500 1 10.500z" fill="#fff" stroke="#3a3a3a" stroke-width="1.400"/><path d="M1 10.500 C6 2 22 2 27 10.500" fill="none" stroke="#1a1a1a" stroke-width="2"/><circle cx="14" cy="10" r="6.300" fill="url(#iris)"/><circle cx="12" cy="8" r="1.600" fill="#fff" opacity="0.85"/><ellipse cx="14" cy="17.500" rx="9" ry="1.500" fill="#666" opacity="0.35"/></svg>
<div class="ev" style="left:1005.7px;width:100px;top:243px;"><span style="letter-spacing:-0.37px">User</span><br><span style="letter-spacing:-0.095px">mode</span></div>
<!-- dmx level -->
<svg class="a" style="left:1096px;top:209px" width="28" height="28" viewBox="0 0 28 28"><rect x="1" y="1" width="26" height="25.500" fill="#0c0c0c"/><rect x="2" y="26" width="25" height="1.500" fill="#555" opacity="0.5"/>
<g id="dmxc"><rect x="2.500" y="2.500" width="4" height="2" fill="#c81414"/><rect x="2.500" y="5.500" width="4" height="2" fill="#c81414"/><rect x="2.500" y="8.500" width="4" height="2" fill="#f0e000"/><rect x="2.500" y="11.500" width="4" height="2" fill="#b8b000"/><rect x="2.500" y="14.500" width="4" height="2" fill="#18c018"/><rect x="2.500" y="17.500" width="4" height="2" fill="#18c018"/><rect x="2.500" y="20.500" width="4" height="2" fill="#18c018"/><rect x="2.500" y="23" width="4" height="2" fill="#18c018"/></g><use href="#dmxc" x="4.800"/><use href="#dmxc" x="9.600"/><use href="#dmxc" x="14.400"/><use href="#dmxc" x="19.200"/></svg>
<div class="ev" style="left:1058.8px;width:100px;top:243px;"><span style="letter-spacing:-0.388px">DMX</span><br><span style="letter-spacing:-0.331px">level</span></div>
<!-- universes patch -->
<svg class="a" style="left:1141px;top:207px" width="31" height="31" viewBox="0 0 31 31"><defs><radialGradient id="glb" cx="0.4" cy="0.35" r="0.7"><stop offset="0" stop-color="#e0e4ee"/><stop offset="0.6" stop-color="#a8b0c4"/><stop offset="1" stop-color="#8088a0"/></radialGradient></defs><circle cx="15.500" cy="15.500" r="14.500" fill="url(#glb)"/><path d="M6 17 c3 -2 6 0 8 2 c2 2 1 5 -1 7 c-1 2 -3 3 -4 2 c-2 -3 -4 -7 -3 -11z M18 20 c3 -2 7 -1 9 1 c-1 3 -4 6 -7 7 c-2 -2 -3 -5 -2 -8z" fill="#f0f2f8" opacity="0.8"/><text x="15.500" y="14" font-family="Liberation Sans,sans-serif" font-weight="bold" font-size="10" fill="#7a84a0" text-anchor="middle" style="letter-spacing:-0.5px">DMX</text></svg>
<div class="ev" style="left:1106.3px;width:100px;top:243px;color:#8d97aa;text-shadow:none"><span style="letter-spacing:-0.393px">Universes</span><br><span style="letter-spacing:0.172px">patch</span></div>
<div class="ev" style="left:1165.2px;width:100px;top:243px;"><span style="letter-spacing:0.36px">Building</span></div>
<svg class="a" style="left:1212px;top:260px" width="6" height="4" viewBox="0 0 6 4"><path d="M0 0h6l-3 3.500z" fill="#56749f"/></svg>
<div class="ev" style="left:1212.3px;width:100px;top:243px;"><span style="letter-spacing:0.3px">Undo</span><br><span style="letter-spacing:-0.25px">Redo</span>&nbsp;&nbsp;&nbsp;</div>
<svg class="a" style="left:1274px;top:260px" width="6" height="4" viewBox="0 0 6 4"><path d="M0 0h6l-3 3.500z" fill="#56749f"/></svg>
<!-- viewport -->
<div class="a" style="left:955px;top:292px;width:381px;height:431px;background:#0c1c5c"></div><div class="a" style="left:956px;top:293px;width:380px;height:429px;background:#050505"></div>
<svg class="a" style="left:957px;top:294px" width="378" height="428" viewBox="957 294 378 428">
<defs>
<linearGradient id="bm" x1="0" y1="0" x2="1" y2="0"><stop offset="0" stop-color="#b848b8" stop-opacity="0"/><stop offset="0.12" stop-color="#b848b8" stop-opacity="0.3"/><stop offset="0.32" stop-color="#bc4cbc" stop-opacity="0.8"/><stop offset="0.5" stop-color="#c452c2"/><stop offset="0.68" stop-color="#bc4cbc" stop-opacity="0.8"/><stop offset="0.88" stop-color="#b848b8" stop-opacity="0.3"/><stop offset="1" stop-color="#b848b8" stop-opacity="0"/></linearGradient>
</defs>
<rect x="956" y="293" width="380" height="429" fill="#353535"/>
<!-- ceiling -->
<path d="M956 293 H1336 V293 L1262 293 L1172 333 L956 305z" fill="#323232"/>
<path d="M956 293 H1270 L1172 333 L956 304z" fill="#333333"/>
<!-- left/back wall -->
<path d="M956 304 L1172 333 L1175 528 L956 551z" fill="#393939"/>
<!-- right wall -->
<path d="M1172 333 L1270 293 H1336 V552 L1175 528z" fill="#353535"/>
<!-- floor -->
<path d="M956 551 L1175 528 L1336 552 V722 H956z" fill="#363636"/>
<!-- fixture 1 -->
<path d="M994 413.500 h11 v3 h-3.500 l0.500 8 c0 3 -5 3 -5 0 l0.500 -8 h-3.500z" fill="#141414"/>
<path d="M1000 427 L982 557 A24 5.500 0 0 0 1030 557z" fill="url(#bm)"/>
<ellipse cx="1006" cy="557" rx="24" ry="5.500" fill="#ea5ae4"/>
<!-- fixture 2 -->
<path d="M1235 332 l2 -5 l15 -2 l16 2 l1 8 l-7 3 l-2 3 l2 10 c1 7 -4 12 -10 12 c-6 0 -10 -5 -9 -11 l2 -12 l-3 -3 l-6 -1z" fill="#131313"/><ellipse cx="1252" cy="345" rx="5" ry="7" fill="#1d1d1d"/>
<path d="M1252 363 L1199 679 A57 23 0 0 0 1313 679z" fill="url(#bm)"/>
<ellipse cx="1256" cy="679" rx="57" ry="23" fill="#e85ce2"/>
</svg>
<!-- status bar -->
<div class="a" style="left:952px;top:725px;width:388px;height:21px;border-radius:0 0 3px 3px;background:linear-gradient(#b5cdf0 0,#9dbbe8 9px,#8cade0 10px,#86a8dc 21px)"></div>
<div class="a" style="left:952px;top:725px;width:11px;height:21px;background:linear-gradient(#e6eefa,#d0def4)"></div>
<div class="a" style="left:963px;top:726px;width:1px;height:19px;background:#6a8cc0"></div>
<div class="t" style="left:971.5px;top:731px;font-size:12.500px;font-weight:bold;color:#4a6898;letter-spacing:0.229px;">Controlled by Sunlite Suite2</div><div class="t" style="left:1154.5px;top:731px;font-size:12.500px;font-weight:bold;color:#4a6898;">|</div><div class="t" style="left:1168px;top:731px;font-size:12.500px;font-weight:bold;color:#4a6898;letter-spacing:-0.57px;">ECO MODE</div><div class="t" style="left:1242px;top:731px;font-size:12.500px;font-weight:bold;color:#4a6898;">|</div><div class="t" style="left:1255.6px;top:731px;font-size:12.500px;font-weight:bold;color:#4a6898;letter-spacing:-0.283px;">DMX ON</div>
<div class="a" style="left:1312px;top:729px;width:3px;height:14px;background:#48e048;box-shadow:0 0 1px #8f8"></div>
<svg class="a" style="left:1321px;top:727px" width="17" height="17" viewBox="0 0 17 17"><path d="M3 2 h12 v11 h-3 v-8 h-9z" fill="#2a2a2a"/><circle cx="7" cy="10.500" r="5" fill="#5a5a5a"/><circle cx="6" cy="9" r="2" fill="#aaa"/></svg>
<!--EASYVIEW-END-->
</body></html>
